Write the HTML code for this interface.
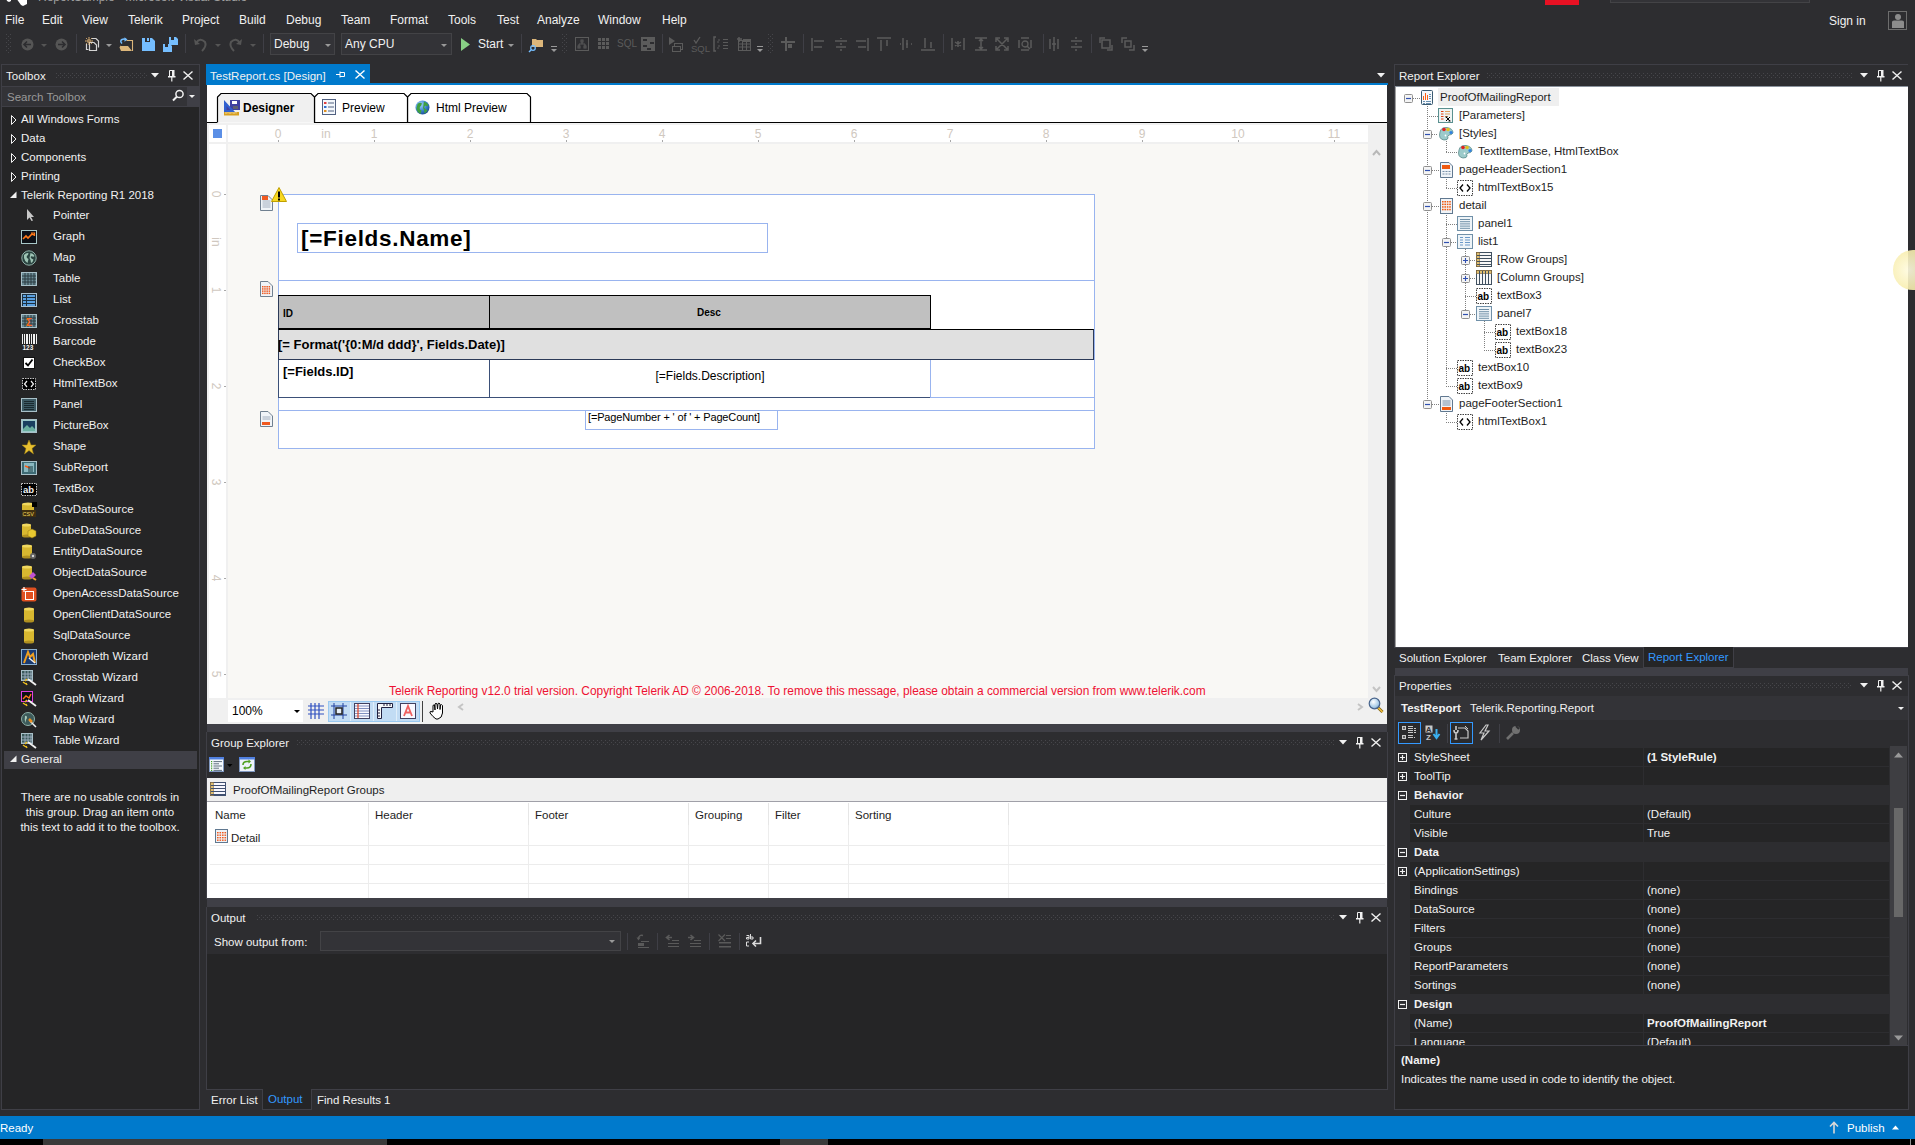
<!DOCTYPE html>
<html><head><meta charset="utf-8">
<style>
*{margin:0;padding:0;box-sizing:border-box}
html,body{width:1915px;height:1145px;overflow:hidden;background:#2d2d30;position:relative;font-family:"Liberation Sans",sans-serif}
.a{position:absolute}
.t{position:absolute;white-space:nowrap;font-size:11.5px;line-height:14px;color:#f1f1f1}
.b{font-weight:bold}
.dots{background-image:radial-gradient(circle,#46464a 0.7px,transparent 0.8px);background-size:4px 4px}
svg{position:absolute;overflow:visible}
</style></head><body>
<svg width="0" height="0" style="position:absolute"><defs><pattern id="dp" width="4" height="4" patternUnits="userSpaceOnUse"><rect x="0" y="0" width="1" height="1" fill="#46464a"/><rect x="2" y="2" width="1" height="1" fill="#46464a"/></pattern></defs></svg>

<!-- ============ TITLE BAR REMNANT ============ -->
<div id="title">
<svg style="left:0;top:0" width="30" height="8"><path d="M6 -2 L11 -2 L11 1 L9 2 L7 1 Z M16 -2 L27 -2 L27 4 L23 6 L21 5 Z" fill="#fff"/></svg>
<div class="t" style="left:38px;top:-10px;color:#a0a0a0;font-size:12px">ReportSample - Microsoft Visual Studio</div>
<div class="a" style="left:1545px;top:0;width:34px;height:5px;background:#e81123"></div>
<div class="a" style="left:1610px;top:-10px;width:200px;height:13px;border:1px solid #434346;background:#333337"></div>
<div class="t" style="left:1829px;top:14px;font-size:12px">Sign in</div>
<div class="a" style="left:1888px;top:11px;width:19px;height:19px;border:1px solid #6d6d6d"></div>
<svg style="left:1889px;top:12px" width="17" height="17"><circle cx="9" cy="5" r="3" fill="#8c8c8c"/><path d="M3 16 L3 10 Q3 8.5 5 8.5 L13 8.5 Q15 8.5 15 10 L15 16 Z" fill="#8c8c8c"/><rect x="7" y="9" width="4" height="7" fill="#2d2d30" opacity="0.0"/></svg>
</div>

<!-- ============ MENU ============ -->
<div id="menu"><div class="t" style="left:5px;top:13px;font-size:12px">File</div><div class="t" style="left:42px;top:13px;font-size:12px">Edit</div><div class="t" style="left:82px;top:13px;font-size:12px">View</div><div class="t" style="left:128px;top:13px;font-size:12px">Telerik</div><div class="t" style="left:182px;top:13px;font-size:12px">Project</div><div class="t" style="left:239px;top:13px;font-size:12px">Build</div><div class="t" style="left:286px;top:13px;font-size:12px">Debug</div><div class="t" style="left:341px;top:13px;font-size:12px">Team</div><div class="t" style="left:390px;top:13px;font-size:12px">Format</div><div class="t" style="left:448px;top:13px;font-size:12px">Tools</div><div class="t" style="left:497px;top:13px;font-size:12px">Test</div><div class="t" style="left:537px;top:13px;font-size:12px">Analyze</div><div class="t" style="left:598px;top:13px;font-size:12px">Window</div><div class="t" style="left:662px;top:13px;font-size:12px">Help</div></div>

<!-- ============ TOOLBAR ============ -->
<div id="toolbar">
<svg style="left:6px;top:34px" width="6" height="19"><rect width="6" height="19" fill="url(#dp)"/></svg>
<svg style="left:21px;top:38px" width="13" height="13"><circle cx="6.5" cy="6.5" r="6" fill="#555"/><path d="M3 6.5 L10 6.5 M6 3.5 L3 6.5 L6 9.5" stroke="#2d2d30" stroke-width="1.6" fill="none"/></svg>
<svg style="left:41px;top:44px" width="7" height="4"><path d="M0 0 L6 0 L3 3 Z" fill="#555"/></svg>
<svg style="left:55px;top:38px" width="13" height="13"><circle cx="6.5" cy="6.5" r="6" fill="#555"/><path d="M3 6.5 L10 6.5 M7 3.5 L10 6.5 L7 9.5" stroke="#2d2d30" stroke-width="1.6" fill="none"/></svg>
<div class="a" style="left:76px;top:34px;width:1px;height:19px;background:#3f3f46"></div>
<svg style="left:85px;top:37px" width="15" height="15"><path d="M6.5 1.5 L11 1.5 L13.5 4 L13.5 10.5" stroke="#d4d4d4" stroke-width="1.2" fill="none"/><path d="M1.5 7 L1.5 12.5 L3.5 12.5" stroke="#d4d4d4" stroke-width="1.2" fill="none"/><path d="M4.5 5.5 L9 5.5 L11.5 8 L11.5 13.5 L4.5 13.5 Z" fill="#2d2d30" stroke="#d4d4d4" stroke-width="1.2"/><circle cx="4" cy="4" r="1.3" fill="none" stroke="#f5c27a" stroke-width="1"/><path d="M4 0 L4 1.8 M4 6.2 L4 8 M0 4 L1.8 4 M6.2 4 L8 4 M1.2 1.2 L2.4 2.4 M5.6 5.6 L6.8 6.8 M6.8 1.2 L5.6 2.4 M2.4 5.6 L1.2 6.8" stroke="#f5c27a" stroke-width="0.9"/></svg>
<svg style="left:106px;top:44px" width="7" height="4"><path d="M0 0 L6 0 L3 3 Z" fill="#999"/></svg>
<svg style="left:119px;top:37px" width="15" height="15"><path d="M7.5 3.5 L13.5 3.5 L13.5 14" stroke="#dcb67a" stroke-width="1.1" fill="none"/><path d="M1.5 8.5 L2 9 L9 9 L13 14 L2 14 L0.5 10.5 Z" fill="#dcb67a"/><path d="M3 6.5 Q0.5 4 3 2.5 Q5 1.5 7 2.5" stroke="#75beff" stroke-width="1.5" fill="none"/><path d="M5.5 0.2 L8.5 2.5 L5.5 4.8 Z" fill="#75beff"/></svg>
<svg style="left:142px;top:38px" width="13" height="13"><path d="M0 0 L10 0 L13 3 L13 13 L0 13 Z" fill="#75beff"/><rect x="3" y="0" width="5" height="4" fill="#2d2d30"/><rect x="5" y="0" width="2" height="3" fill="#75beff"/></svg>
<svg style="left:163px;top:37px" width="15" height="15"><path d="M6 0 L13 0 L15 2 L15 8 L6 8 Z" fill="#75beff"/><path d="M0 7 L7 7 L9 9 L9 15 L0 15 Z" fill="#75beff"/><rect x="8" y="0" width="3" height="3" fill="#2d2d30"/><rect x="2" y="7" width="3" height="3" fill="#2d2d30"/></svg>
<div class="a" style="left:185px;top:34px;width:1px;height:19px;background:#3f3f46"></div>
<svg style="left:194px;top:37px" width="13" height="15"><path d="M2 6 Q6 0 11 5 Q13 9 8 14" stroke="#555" stroke-width="2" fill="none"/><path d="M0 2 L1 8 L6 7 Z" fill="#555"/></svg>
<svg style="left:215px;top:44px" width="7" height="4"><path d="M0 0 L6 0 L3 3 Z" fill="#555"/></svg>
<svg style="left:229px;top:37px" width="13" height="15"><path d="M11 6 Q7 0 2 5 Q0 9 5 14" stroke="#555" stroke-width="2" fill="none"/><path d="M13 2 L12 8 L7 7 Z" fill="#555"/></svg>
<svg style="left:250px;top:44px" width="7" height="4"><path d="M0 0 L6 0 L3 3 Z" fill="#555"/></svg>
<div class="a" style="left:263px;top:34px;width:1px;height:19px;background:#3f3f46"></div>
<div class="a" style="left:270px;top:33px;width:65px;height:22px;border:1px solid #434346;background:#333337"></div>
<div class="t" style="left:274px;top:37px;font-size:12px">Debug</div>
<svg style="left:325px;top:44px" width="7" height="4"><path d="M0 0 L6 0 L3 3 Z" fill="#999"/></svg>
<div class="a" style="left:341px;top:33px;width:111px;height:22px;border:1px solid #434346;background:#333337"></div>
<div class="t" style="left:345px;top:37px;font-size:12px">Any CPU</div>
<svg style="left:441px;top:44px" width="7" height="4"><path d="M0 0 L6 0 L3 3 Z" fill="#999"/></svg>
<svg style="left:461px;top:38px" width="10" height="13"><path d="M0 0 L9 6.5 L0 13 Z" fill="#89d185"/></svg>
<div class="t" style="left:478px;top:37px;font-size:12px">Start</div>
<svg style="left:508px;top:44px" width="7" height="4"><path d="M0 0 L6 0 L3 3 Z" fill="#999"/></svg>
<div class="a" style="left:521px;top:34px;width:1px;height:19px;background:#3f3f46"></div>
<svg style="left:529px;top:37px" width="15" height="15"><path d="M3 2 L7 2 L8 3 L14 3 L14 10 L3 10 Z" fill="#dcb67a"/><circle cx="4" cy="11" r="2.3" stroke="#75beff" stroke-width="1.3" fill="none"/><path d="M2.5 12.5 L0 15" stroke="#75beff" stroke-width="1.5"/></svg>
<svg style="left:551px;top:46px" width="7" height="8"><rect x="0" y="0" width="6" height="1" fill="#999"/><path d="M0 3 L6 3 L3 6 Z" fill="#999"/></svg>
<svg style="left:562px;top:34px" width="6" height="19"><rect width="6" height="19" fill="url(#dp)"/></svg>
<svg style="left:575px;top:37px" width="14" height="14"><rect x="0.5" y="0.5" width="13" height="13" stroke="#5b5b5b" fill="none"/><rect x="6" y="3" width="2" height="2" stroke="#5b5b5b" fill="none"/><path d="M7 5 L7 7 M4 7 L10 7 M4 7 L4 9 M10 7 L10 9" stroke="#5b5b5b"/><rect x="3" y="9" width="2" height="2" stroke="#5b5b5b" fill="none"/><rect x="9" y="9" width="2" height="2" stroke="#5b5b5b" fill="none"/></svg>
<svg style="left:598px;top:38px" width="12" height="12"><rect x="0" y="0" width="3" height="3" fill="#5b5b5b"/><rect x="0" y="4" width="3" height="3" fill="#5b5b5b"/><rect x="0" y="8" width="3" height="3" fill="#5b5b5b"/><rect x="4" y="0" width="3" height="3" fill="#5b5b5b"/><rect x="4" y="4" width="3" height="3" fill="#5b5b5b"/><rect x="4" y="8" width="3" height="3" fill="#5b5b5b"/><rect x="8" y="0" width="3" height="3" fill="#5b5b5b"/><rect x="8" y="4" width="3" height="3" fill="#5b5b5b"/><rect x="8" y="8" width="3" height="3" fill="#5b5b5b"/></svg>
<div class="t" style="left:617px;top:37px;font-size:10px;color:#5b5b5b">SQL</div>
<svg style="left:641px;top:37px" width="14" height="14"><rect x="0" y="0" width="14" height="14" fill="#5b5b5b"/><rect x="2" y="2" width="4" height="2" fill="#2d2d30"/><rect x="9" y="5" width="4" height="2" fill="#2d2d30"/><rect x="2" y="8" width="4" height="2" fill="#2d2d30"/><rect x="6" y="11" width="4" height="2" fill="#2d2d30"/></svg>
<div class="a" style="left:662px;top:34px;width:1px;height:19px;background:#3f3f46"></div>
<svg style="left:669px;top:37px" width="16" height="15"><path d="M0 0 L6 4 L0 8 Z" fill="#5b5b5b"/><rect x="5.5" y="6.5" width="8" height="6" stroke="#5b5b5b" fill="none"/><rect x="3.5" y="9.5" width="8" height="5" stroke="#5b5b5b" fill="#2d2d30"/></svg>
<svg style="left:692px;top:37px" width="15" height="15"><path d="M2 3 L4 6 L8 0" stroke="#5b5b5b" stroke-width="1.3" fill="none"/></svg><div class="t" style="left:691px;top:42px;font-size:9.5px;color:#5b5b5b">SQL</div>
<svg style="left:714px;top:37px" width="14" height="14"><path d="M2 0 L0 0 L0 14 L2 14" stroke="#5b5b5b" stroke-width="1.5" fill="none"/><path d="M4 3 L6 3 M4 4 L4 6 M4 9 L6 9 M4 10 L4 12 M9 2.5 L14 2.5 M9 5.5 L14 5.5 M9 8.5 L14 8.5 M9 11.5 L14 11.5" stroke="#5b5b5b" fill="none"/></svg>
<svg style="left:737px;top:37px" width="14" height="14"><path d="M2 0 L2 5 M0 2 L5 2" stroke="#5b5b5b" stroke-width="1.5"/><rect x="1.5" y="3.5" width="12" height="10" stroke="#5b5b5b" fill="none"/><path d="M1.5 7 L13.5 7 M1.5 10 L13.5 10 M5.5 4 L5.5 14 M9.5 4 L9.5 14" stroke="#5b5b5b"/><rect x="6" y="2" width="8" height="3" fill="#5b5b5b"/></svg>
<svg style="left:757px;top:46px" width="7" height="8"><rect x="0" y="0" width="6" height="1" fill="#999"/><path d="M0 3 L6 3 L3 6 Z" fill="#999"/></svg>
<svg style="left:768px;top:34px" width="6" height="19"><rect width="6" height="19" fill="url(#dp)"/></svg>
<svg style="left:781px;top:37px" width="15" height="15"><path d="M0 5 L14 5 M5 0 L5 14" stroke="#5b5b5b" stroke-width="2"/><rect x="7" y="7" width="4" height="4" fill="#5b5b5b"/></svg>
<div class="a" style="left:803px;top:34px;width:1px;height:19px;background:#3f3f46"></div>
<svg style="left:811px;top:37px" width="15" height="15"><path d="M1 1 L1 14 M3 4 L13 4 M3 10 L11 10" stroke="#5b5b5b" stroke-width="1.5" fill="none"/></svg>
<svg style="left:834px;top:37px" width="15" height="15"><path d="M7 1 L7 2 M1 4 L13 4 M2 10 L12 10 M7 12 L7 14 M7 6 L7 8" stroke="#5b5b5b" stroke-width="1.5" fill="none"/></svg>
<svg style="left:855px;top:37px" width="15" height="15"><path d="M13 1 L13 14 M1 4 L11 4 M3 10 L11 10" stroke="#5b5b5b" stroke-width="1.5" fill="none"/></svg>
<svg style="left:877px;top:37px" width="15" height="15"><path d="M0 1 L14 1 M4 3 L4 14 M10 3 L10 9" stroke="#5b5b5b" stroke-width="1.5" fill="none"/></svg>
<svg style="left:900px;top:37px" width="15" height="15"><path d="M0 7 L1 7 M3 1 L3 13 M7 3 L7 11 M11 7 L12 7 M6 7 L8 7" stroke="#5b5b5b" stroke-width="1.5" fill="none"/></svg>
<svg style="left:921px;top:37px" width="15" height="15"><path d="M0 13 L14 13 M4 1 L4 11 M10 5 L10 11" stroke="#5b5b5b" stroke-width="1.5" fill="none"/></svg>
<div class="a" style="left:943px;top:34px;width:1px;height:19px;background:#3f3f46"></div>
<svg style="left:951px;top:37px" width="15" height="15"><path d="M1 1 L1 13 M13 1 L13 13 M4 5 L10 9 M10 5 L4 9 M7 4 L7 10" stroke="#5b5b5b" stroke-width="1.5" fill="none"/></svg>
<svg style="left:974px;top:37px" width="15" height="15"><path d="M1 1 L13 1 M1 13 L13 13 M7 2 L7 12 M5 4 L7 2 L9 4 M5 10 L7 12 L9 10" stroke="#5b5b5b" stroke-width="1.5" fill="none"/></svg>
<svg style="left:995px;top:37px" width="15" height="15"><path d="M1 5 L1 1 L5 1 M9 1 L13 1 L13 5 M1 9 L1 13 L5 13 M13 9 L13 13 L9 13 M2 2 L12 12 M12 2 L2 12" stroke="#5b5b5b" stroke-width="1.5" fill="none"/></svg>
<svg style="left:1018px;top:37px" width="15" height="15"><path d="M1 3 L1 11 M13 3 L13 11 M3 1 L11 1 M3 13 L11 13" stroke="#5b5b5b" stroke-width="1.5"/><circle cx="7" cy="7" r="3" stroke="#5b5b5b" stroke-width="1.3" fill="none"/><path d="M9 9 L12 12" stroke="#5b5b5b" stroke-width="1.5"/></svg>
<div class="a" style="left:1043px;top:34px;width:1px;height:19px;background:#3f3f46"></div>
<svg style="left:1049px;top:37px" width="15" height="15"><path d="M1 2 L1 12 M5 0 L5 14 M9 2 L9 12 M3 7 L7 7" stroke="#5b5b5b" stroke-width="1.5" fill="none"/></svg>
<svg style="left:1070px;top:37px" width="15" height="15"><path d="M5 1 L7 1 M1 4 L12 4 M1 10 L12 10 M5 13 L7 13 M6 6 L6 8" stroke="#5b5b5b" stroke-width="1.5" fill="none"/></svg>
<div class="a" style="left:1091px;top:34px;width:1px;height:19px;background:#3f3f46"></div>
<svg style="left:1099px;top:37px" width="15" height="15"><path d="M1 6 L1 1 L6 1 M8 13 L13 13 L13 8 M3 3 L11 3 L11 11 L3 11 Z" stroke="#5b5b5b" stroke-width="1.5" fill="none"/></svg>
<svg style="left:1121px;top:37px" width="15" height="15"><path d="M1 6 L1 1 L6 1 M8 13 L13 13 L13 8 M4 4 L10 4 L10 10 L4 10 Z" stroke="#5b5b5b" stroke-width="1.5" fill="none"/></svg>
<svg style="left:1142px;top:46px" width="7" height="8"><rect x="0" y="0" width="6" height="1" fill="#999"/><path d="M0 3 L6 3 L3 6 Z" fill="#999"/></svg>
</div>

<!-- ============ TOOLBOX ============ -->
<div id="toolbox">
<div class="a" style="left:1px;top:64px;width:199px;height:1046px;border:1px solid #3f3f46;background:#252526"></div>
<div class="a" style="left:2px;top:65px;width:197px;height:21px;background:#2d2d30"></div>
<div class="t" style="left:6px;top:69px">Toolbox</div>
<svg style="left:56px;top:73px" width="92" height="5"><rect width="92" height="5" fill="url(#dp)"/></svg>
<svg style="left:151px;top:73px" width="9" height="5"><path d="M0 0 L8 0 L4 4.5 Z" fill="#f1f1f1"/></svg><svg style="left:168px;top:70px" width="8" height="12"><path d="M1.5 0.5 L6 0.5 M1.5 0.5 L1.5 6" stroke="#f1f1f1" stroke-width="1" fill="none"/><rect x="4" y="0" width="2.5" height="6" fill="#f1f1f1"/><rect x="0" y="6" width="7.5" height="1.5" fill="#f1f1f1"/><rect x="3.2" y="7" width="1.2" height="4.5" fill="#f1f1f1"/></svg><svg style="left:183px;top:71px" width="10" height="9"><path d="M0.5 0.5 L9.5 8.5 M9.5 0.5 L0.5 8.5" stroke="#f1f1f1" stroke-width="1.4"/></svg>
<div class="a" style="left:2px;top:86px;width:197px;height:1px;background:#3f3f46"></div>
<div class="a" style="left:2px;top:87px;width:185px;height:19px;background:#333337"></div>
<div class="a" style="left:187px;top:87px;width:12px;height:19px;background:#3f3f46"></div>
<div class="a" style="left:2px;top:106px;width:197px;height:1px;background:#3f3f46"></div>
<div class="t" style="left:7px;top:90px;color:#999999">Search Toolbox</div>
<svg style="left:172px;top:89px" width="14" height="14"><circle cx="7.5" cy="5" r="3.6" stroke="#f1f1f1" stroke-width="1.5" fill="none"/><path d="M5 7.5 L1 11.5" stroke="#f1f1f1" stroke-width="2"/></svg>
<svg style="left:189px;top:95px" width="7" height="4"><path d="M0 0 L6 0 L3 3 Z" fill="#f1f1f1"/></svg>
<svg style="left:10px;top:115px" width="7" height="10"><path d="M1.5 0.5 L6 5 L1.5 9.5 Z" stroke="#f1f1f1" fill="none"/></svg>
<div class="t" style="left:21px;top:112px">All Windows Forms</div>
<svg style="left:10px;top:134px" width="7" height="10"><path d="M1.5 0.5 L6 5 L1.5 9.5 Z" stroke="#f1f1f1" fill="none"/></svg>
<div class="t" style="left:21px;top:131px">Data</div>
<svg style="left:10px;top:153px" width="7" height="10"><path d="M1.5 0.5 L6 5 L1.5 9.5 Z" stroke="#f1f1f1" fill="none"/></svg>
<div class="t" style="left:21px;top:150px">Components</div>
<svg style="left:10px;top:172px" width="7" height="10"><path d="M1.5 0.5 L6 5 L1.5 9.5 Z" stroke="#f1f1f1" fill="none"/></svg>
<div class="t" style="left:21px;top:169px">Printing</div>
<svg style="left:10px;top:191px" width="7" height="8"><path d="M6.5 0.5 L6.5 7 L0 7 Z" fill="#f1f1f1"/></svg>
<div class="t" style="left:21px;top:188px">Telerik Reporting R1 2018</div>
<svg style="left:21px;top:208px" width="16" height="16"><path d="M6 1 L6 12 L8.5 9.5 L10.5 13 L12 12.5 L10 9 L13 9 Z" fill="#c8c8c8"/></svg>
<div class="t" style="left:53px;top:208px">Pointer</div>
<svg style="left:21px;top:229px" width="16" height="16"><rect x="0.5" y="1.5" width="15" height="13" fill="#0d1117" stroke="#a8c8c8"/><path d="M2 10 L5 7 L7 9 L11 5 L13 6" stroke="#ff7a1a" stroke-width="1.6" fill="none"/><path d="M10 4 L13.5 4 L13.5 7" stroke="#ff7a1a" stroke-width="1.2" fill="none"/></svg>
<div class="t" style="left:53px;top:229px">Graph</div>
<svg style="left:21px;top:250px" width="16" height="16"><circle cx="8" cy="8" r="7.2" fill="#2a4440" stroke="#8fb0a8" stroke-width="1"/><path d="M3 5 Q5 2.5 7.5 3 L7 5 Q5 6 6 8 L7.5 9 L6.5 13 Q3.5 11 3 8 Z" fill="#9ec4b4"/><path d="M9.5 3 Q12.5 3.5 13.5 6 L12 7 L11 6 L9.5 7 Q10.5 9 12.5 9.5 Q12 12 10 13 L9.5 10 L8.5 8 Z" fill="#9ec4b4"/></svg>
<div class="t" style="left:53px;top:250px">Map</div>
<svg style="left:21px;top:271px" width="16" height="16"><rect x="0.5" y="1.5" width="15" height="13" fill="#6a8a94" stroke="#a8c0c8"/><path d="M4 2 L4 14" stroke="#2b3b40"/><path d="M7 2 L7 14" stroke="#2b3b40"/><path d="M10 2 L10 14" stroke="#2b3b40"/><path d="M13 2 L13 14" stroke="#2b3b40"/><path d="M1 5 L15 5" stroke="#2b3b40"/><path d="M1 8 L15 8" stroke="#2b3b40"/><path d="M1 11 L15 11" stroke="#2b3b40"/></svg>
<div class="t" style="left:53px;top:271px">Table</div>
<svg style="left:21px;top:292px" width="16" height="16"><rect x="0.5" y="1.5" width="15" height="13" fill="#1c3040" stroke="#a8c0d0"/><rect x="2" y="3" width="3" height="2" fill="#5aa0e0"/><rect x="6" y="3" width="8" height="2" fill="#5aa0e0"/><rect x="2" y="6" width="3" height="2" fill="#5aa0e0"/><rect x="6" y="6" width="8" height="2" fill="#5aa0e0"/><rect x="2" y="9" width="3" height="2" fill="#5aa0e0"/><rect x="6" y="9" width="8" height="2" fill="#5aa0e0"/><rect x="2" y="12" width="3" height="2" fill="#5aa0e0"/><rect x="6" y="12" width="8" height="2" fill="#5aa0e0"/></svg>
<div class="t" style="left:53px;top:292px">List</div>
<svg style="left:21px;top:313px" width="16" height="16"><rect x="0.5" y="1.5" width="15" height="13" fill="#6a8a94" stroke="#a8c0c8"/><path d="M4 2 L4 14" stroke="#2b3b40"/><path d="M7 2 L7 14" stroke="#2b3b40"/><path d="M10 2 L10 14" stroke="#2b3b40"/><path d="M13 2 L13 14" stroke="#2b3b40"/><path d="M1 5 L15 5" stroke="#2b3b40"/><path d="M1 8 L15 8" stroke="#2b3b40"/><path d="M1 11 L15 11" stroke="#2b3b40"/><text x="5" y="13" font-size="10" font-weight="bold" fill="#ff6a1a" font-family="Liberation Sans">Σ</text></svg>
<div class="t" style="left:53px;top:313px">Crosstab</div>
<svg style="left:21px;top:334px" width="16" height="16"><rect x="1" y="0" width="1" height="10" fill="#f1f1f1"/><rect x="3" y="0" width="1" height="10" fill="#f1f1f1"/><rect x="5" y="0" width="2" height="10" fill="#f1f1f1"/><rect x="8" y="0" width="1" height="10" fill="#f1f1f1"/><rect x="10" y="0" width="1" height="10" fill="#f1f1f1"/><rect x="12" y="0" width="2" height="10" fill="#f1f1f1"/><rect x="15" y="0" width="1" height="10" fill="#f1f1f1"/><text x="1.5" y="16" font-size="6.5" font-weight="bold" fill="#f1f1f1" font-family="Liberation Sans">123</text></svg>
<div class="t" style="left:53px;top:334px">Barcode</div>
<svg style="left:21px;top:355px" width="16" height="16"><rect x="2.5" y="2.5" width="11" height="11" fill="#fff" stroke="#111"/><path d="M4.5 8 L7 10.5 L11.5 4.5" stroke="#000" stroke-width="1.8" fill="none"/></svg>
<div class="t" style="left:53px;top:355px">CheckBox</div>
<svg style="left:21px;top:376px" width="16" height="16"><rect x="1.5" y="2.5" width="13" height="11" fill="#000" stroke="#c8c8c8" stroke-dasharray="1.5,1"/><path d="M6 5 L3.5 8 L6 11 M10 5 L12.5 8 L10 11" stroke="#f1f1f1" stroke-width="1.2" fill="none"/></svg>
<div class="t" style="left:53px;top:376px">HtmlTextBox</div>
<svg style="left:21px;top:397px" width="16" height="16"><rect x="0.5" y="1.5" width="15" height="13" fill="#3d5a64" stroke="#a8c0c8"/><path d="M3 4.5 L13 4.5" stroke="#1a2a30"/><path d="M3 6.5 L13 6.5" stroke="#1a2a30"/><path d="M3 8.5 L13 8.5" stroke="#1a2a30"/><path d="M3 10.5 L13 10.5" stroke="#1a2a30"/><path d="M3 12.5 L13 12.5" stroke="#1a2a30"/></svg>
<div class="t" style="left:53px;top:397px">Panel</div>
<svg style="left:21px;top:418px" width="16" height="16"><rect x="0.5" y="1.5" width="15" height="13" fill="#9ac8c8" stroke="#a8c0c8"/><rect x="2" y="3" width="12" height="10" fill="#1a4060"/><path d="M2 11 L6 7 L9 10 L11 8 L14 11 L14 13 L2 13 Z" fill="#6ab0a0"/></svg>
<div class="t" style="left:53px;top:418px">PictureBox</div>
<svg style="left:21px;top:439px" width="16" height="16"><path d="M8 1 L10 6 L15 6 L11 9.5 L12.5 15 L8 11.5 L3.5 15 L5 9.5 L1 6 L6 6 Z" fill="#e8c030" stroke="#a08010" stroke-width="0.5"/></svg>
<div class="t" style="left:53px;top:439px">Shape</div>
<svg style="left:21px;top:460px" width="16" height="16"><rect x="0.5" y="1.5" width="15" height="13" fill="#3d6a74" stroke="#a8c0c8"/><rect x="3" y="3" width="10" height="9" fill="#8ab8c0"/><path d="M4 6 L9 8" stroke="#ff5a10" stroke-width="1.5"/><path d="M7 7 L12 7" stroke="#1a3a40"/><path d="M7 9 L12 9" stroke="#1a3a40"/><path d="M7 11 L12 11" stroke="#1a3a40"/></svg>
<div class="t" style="left:53px;top:460px">SubReport</div>
<svg style="left:21px;top:481px" width="16" height="16"><rect x="0.5" y="2.5" width="15" height="12" fill="#000" stroke="#c8c8c8" stroke-dasharray="1.5,1"/><text x="2" y="12" font-size="9.5" font-weight="bold" fill="#f1f1f1" font-family="Liberation Sans">ab</text></svg>
<div class="t" style="left:53px;top:481px">TextBox</div>
<svg style="left:21px;top:502px" width="16" height="16"><rect x="1" y="2" width="12" height="11" fill="#d8b830"/><ellipse cx="7.0" cy="2" rx="6.0" ry="1.5" fill="#f0d860"/><ellipse cx="7.0" cy="13" rx="6.0" ry="1.5" fill="#b09020"/><rect x="11" y="0" width="5" height="5" fill="#000"/><rect x="1" y="8" width="14" height="7" fill="#403010"/><text x="1.5" y="14" font-size="5.5" fill="#f0d860" font-family="Liberation Sans">CSV</text></svg>
<div class="t" style="left:53px;top:502px">CsvDataSource</div>
<svg style="left:21px;top:523px" width="16" height="16"><rect x="1" y="2" width="9" height="11" fill="#d8b830"/><ellipse cx="5.5" cy="2" rx="4.5" ry="1.5" fill="#f0d860"/><ellipse cx="5.5" cy="13" rx="4.5" ry="1.5" fill="#b09020"/><path d="M7 8 L11 6 L15 8 L15 13 L11 15 L7 13 Z" fill="#e8c830" stroke="#907010" stroke-width="0.5"/></svg>
<div class="t" style="left:53px;top:523px">CubeDataSource</div>
<svg style="left:21px;top:544px" width="16" height="16"><rect x="1" y="2" width="10" height="11" fill="#d8b830"/><ellipse cx="6.0" cy="2" rx="5.0" ry="1.5" fill="#f0d860"/><ellipse cx="6.0" cy="13" rx="5.0" ry="1.5" fill="#b09020"/><circle cx="12" cy="12" r="3" fill="#606060"/><circle cx="12" cy="12" r="1.2" fill="#d8d8d8"/></svg>
<div class="t" style="left:53px;top:544px">EntityDataSource</div>
<svg style="left:21px;top:565px" width="16" height="16"><rect x="1" y="2" width="10" height="11" fill="#d8b830"/><ellipse cx="6.0" cy="2" rx="5.0" ry="1.5" fill="#f0d860"/><ellipse cx="6.0" cy="13" rx="5.0" ry="1.5" fill="#b09020"/><path d="M8 11 L12 7 L15 10 L11 14 Z" fill="#c050d0"/><path d="M12 13 L15 15" stroke="#f0a030" stroke-width="2"/></svg>
<div class="t" style="left:53px;top:565px">ObjectDataSource</div>
<svg style="left:21px;top:586px" width="16" height="16"><rect x="0.5" y="1.5" width="15" height="14" rx="2" fill="#e05020"/><rect x="4.5" y="5.5" width="8" height="8" fill="#e05020" stroke="#fff"/><path d="M3 1 L3 6 M0.5 3.5 L5.5 3.5" stroke="#fff" stroke-width="1.2"/></svg>
<div class="t" style="left:53px;top:586px">OpenAccessDataSource</div>
<svg style="left:21px;top:607px" width="16" height="16"><rect x="3" y="2" width="10" height="12" fill="#d8b830"/><ellipse cx="8.0" cy="2" rx="5.0" ry="1.5" fill="#f0d860"/><ellipse cx="8.0" cy="14" rx="5.0" ry="1.5" fill="#b09020"/></svg>
<div class="t" style="left:53px;top:607px">OpenClientDataSource</div>
<svg style="left:21px;top:628px" width="16" height="16"><rect x="3" y="2" width="10" height="12" fill="#d8b830"/><ellipse cx="8.0" cy="2" rx="5.0" ry="1.5" fill="#f0d860"/><ellipse cx="8.0" cy="14" rx="5.0" ry="1.5" fill="#b09020"/></svg>
<div class="t" style="left:53px;top:628px">SqlDataSource</div>
<svg style="left:21px;top:649px" width="16" height="16"><rect x="0.5" y="0.5" width="15" height="15" fill="#1a3a70" stroke="#8ab0d0"/><path d="M3 14 L7 3 L9 8 L12 5 L14 14" stroke="#f0a020" stroke-width="2" fill="none"/><path d="M8 9 L14 14" stroke="#f1f1f1" stroke-width="1.5"/></svg>
<div class="t" style="left:53px;top:649px">Choropleth Wizard</div>
<svg style="left:21px;top:670px" width="16" height="16"><rect x="0.5" y="0.5" width="11" height="10" fill="#3a5a5a" stroke="#a8c0c8"/><path d="M4 1 L4 10" stroke="#9ab"/><path d="M7 1 L7 10" stroke="#9ab"/><path d="M10 1 L10 10" stroke="#9ab"/><path d="M1 4 L11 4" stroke="#9ab"/><path d="M1 7 L11 7" stroke="#9ab"/><path d="M1 10 L11 10" stroke="#9ab"/><path d="M7 9 L15 15" stroke="#f1f1f1" stroke-width="1.8"/><path d="M4 11 L6 9 M2 12 L5 14 M5 13 L6 15" stroke="#f0c020" stroke-width="1.4"/></svg>
<div class="t" style="left:53px;top:670px">Crosstab Wizard</div>
<svg style="left:21px;top:691px" width="16" height="16"><rect x="0.5" y="0.5" width="11" height="10" fill="#0d1117" stroke="#e040e0"/><path d="M2 8 L5 5 L8 7 L10 3" stroke="#ff7a1a" stroke-width="1.4" fill="none"/><path d="M7 9 L15 15" stroke="#f1f1f1" stroke-width="1.8"/><path d="M4 11 L6 9 M2 12 L5 14 M5 13 L6 15" stroke="#f0c020" stroke-width="1.4"/></svg>
<div class="t" style="left:53px;top:691px">Graph Wizard</div>
<svg style="left:21px;top:712px" width="16" height="16"><circle cx="7" cy="7" r="6.5" fill="#3c5a5a" stroke="#8fb0a8"/><path d="M4 4 Q6 3 6 6 Q4 8 5 11 Q3 8 4 4" fill="#a8c8b8"/><path d="M9 9 L15 15" stroke="#f1f1f1" stroke-width="1.5"/><path d="M8 7 L11 10" stroke="#f09020" stroke-width="2.5"/></svg>
<div class="t" style="left:53px;top:712px">Map Wizard</div>
<svg style="left:21px;top:733px" width="16" height="16"><rect x="0.5" y="0.5" width="11" height="10" fill="#3a5a5a" stroke="#a8c0c8"/><path d="M4 1 L4 10" stroke="#9ab"/><path d="M7 1 L7 10" stroke="#9ab"/><path d="M10 1 L10 10" stroke="#9ab"/><path d="M1 4 L11 4" stroke="#9ab"/><path d="M1 7 L11 7" stroke="#9ab"/><path d="M1 10 L11 10" stroke="#9ab"/><path d="M7 9 L15 15" stroke="#f1f1f1" stroke-width="1.8"/><path d="M4 11 L6 9 M2 12 L5 14 M5 13 L6 15" stroke="#f0c020" stroke-width="1.4"/></svg>
<div class="t" style="left:53px;top:733px">Table Wizard</div>
<div class="a" style="left:4px;top:751px;width:193px;height:18px;background:#3f3f46"></div>
<svg style="left:10px;top:755px" width="7" height="8"><path d="M6.5 0.5 L6.5 7 L0 7 Z" fill="#f1f1f1"/></svg>
<div class="t" style="left:21px;top:752px">General</div>
<div class="t" style="left:0;width:200px;text-align:center;top:790px;line-height:15px;white-space:normal;padding:0 14px">There are no usable controls in<br>this group. Drag an item onto<br>this text to add it to the toolbox.</div>
</div>

<!-- ============ DOCUMENT ============ -->
<div id="doc">
<div class="a" style="left:206px;top:64px;width:164px;height:21px;background:#007acc"></div>
<div class="t" style="left:210px;top:69px">TestReport.cs [Design]</div>
<svg style="left:336px;top:70px" width="10" height="9"><path d="M0 4.5 L4 4.5 M4 1.5 L4 7.5 M4 2.5 L8.5 2.5 L8.5 6.5 L4 6.5 M8.5 4.5 L8.5 4.5" stroke="#fff" stroke-width="1" fill="none"/></svg>
<svg style="left:355px;top:70px" width="10" height="9"><path d="M0.5 0.5 L9.5 8.5 M9.5 0.5 L0.5 8.5" stroke="#fff" stroke-width="1.4"/></svg>
<div class="a" style="left:206px;top:83px;width:1182px;height:2px;background:#007acc"></div>
<svg style="left:1377px;top:73px" width="9" height="5"><path d="M0 0 L8 0 L4 4.5 Z" fill="#f1f1f1"/></svg>
<div class="a" style="left:207px;top:85px;width:1180px;height:639px;background:#fff"></div>
<svg style="left:407px;top:93px" width="124" height="30"><path d="M0.5 29.5 L0.5 4 L4 0.5 L120 0.5 L123.5 4 L123.5 29.5" fill="#fff" stroke="#000" stroke-width="1.2"/></svg>
<svg style="left:314px;top:93px" width="94" height="30"><path d="M0.5 29.5 L0.5 4 L4 0.5 L90 0.5 L93.5 4 L93.5 29.5" fill="#fff" stroke="#000" stroke-width="1.2"/></svg>
<svg style="left:217px;top:93px" width="98" height="30"><path d="M0.5 29.5 L0.5 4 L4 0.5 L94 0.5 L97.5 4 L97.5 29.5" fill="#f0f0f0" stroke="#000" stroke-width="1.2"/></svg>
<div class="a" style="left:207px;top:122px;width:10px;height:1px;background:#000"></div>
<div class="a" style="left:314px;top:122px;width:1073px;height:1px;background:#000"></div>
<svg style="left:224px;top:100px" width="16" height="16"><rect x="6" y="0" width="10" height="10" fill="#4040a0"/><rect x="8" y="1" width="5" height="3" fill="#fff"/><rect x="9" y="6" width="5" height="3" fill="#606070"/><path d="M0 0 L0 12 L11 12 Z" fill="#3060d0"/><path d="M2.5 6 L2.5 10 L6.5 10 Z" fill="#4040a0"/><rect x="0" y="12" width="15" height="3.5" fill="#d8a020"/><path d="M2 12 L2 14 M4 12 L4 13.5 M6 12 L6 14 M8 12 L8 13.5 M10 12 L10 14 M12 12 L12 13.5" stroke="#fff" stroke-width="0.6"/></svg>
<div class="t b" style="left:243px;top:101px;color:#000;font-size:12px">Designer</div>
<svg style="left:322px;top:99px" width="15" height="16"><rect x="0.5" y="0.5" width="13" height="15" fill="#f4f8fc" stroke="#506080"/><rect x="2" y="3" width="2.5" height="2" fill="#e04040"/><rect x="2" y="7" width="2.5" height="2" fill="#3070d0"/><rect x="2" y="11" width="2.5" height="2" fill="#e09020"/><path d="M6 4 L12 4 M6 8 L12 8 M6 12 L12 12" stroke="#506080"/></svg>
<div class="t" style="left:342px;top:101px;color:#000;font-size:12px">Preview</div>
<svg style="left:415px;top:100px" width="15" height="15"><defs><radialGradient id="gg" cx="0.35" cy="0.3" r="0.75"><stop offset="0" stop-color="#a8d8ff"/><stop offset="0.6" stop-color="#3a80d0"/><stop offset="1" stop-color="#1a4a90"/></radialGradient></defs><circle cx="7.5" cy="7.5" r="7" fill="url(#gg)"/><path d="M2.5 4 Q5 2 7 3.5 L6 6 Q4 7 5 9.5 L6.5 10.5 L5.5 14 Q2 12 1.5 8.5 Z" fill="#40a040"/><path d="M9 1.5 Q12.5 2.5 13.5 5 L12 6.5 L10.5 5.5 L9 7 Q10 9.5 12.5 10 Q11.5 13 9.5 13.5 L9 10 L8 8 Z" fill="#40a040"/></svg>
<div class="t" style="left:436px;top:101px;color:#000;font-size:12px">Html Preview</div>
<div class="a" style="left:207px;top:123px;width:1180px;height:575px;background:#f0f0f0"></div>
<div class="a" style="left:209px;top:125px;width:17px;height:17px;background:#fff"></div>
<div class="a" style="left:213px;top:129px;width:9px;height:9px;background:#5b8fe6"></div>
<div class="a" style="left:228px;top:125px;width:1140px;height:17px;background:#fff"></div>
<div class="a" style="left:209px;top:144px;width:17px;height:554px;background:#fff"></div>
<div class="a" style="left:228px;top:144px;width:1140px;height:554px;background:#f9f8f5"></div>
<div class="t" style="left:258px;width:40px;text-align:center;top:127px;color:#d0c8c0;font-size:12px">0</div>
<div class="a" style="left:278px;top:140px;width:1px;height:2px;background:#a8a8a8"></div>
<div class="t" style="left:306px;width:40px;text-align:center;top:127px;color:#d0c8c0;font-size:12px">in</div>
<div class="t" style="left:354px;width:40px;text-align:center;top:127px;color:#d0c8c0;font-size:12px">1</div>
<div class="a" style="left:374px;top:140px;width:1px;height:2px;background:#a8a8a8"></div>
<div class="t" style="left:450px;width:40px;text-align:center;top:127px;color:#d0c8c0;font-size:12px">2</div>
<div class="a" style="left:470px;top:140px;width:1px;height:2px;background:#a8a8a8"></div>
<div class="t" style="left:546px;width:40px;text-align:center;top:127px;color:#d0c8c0;font-size:12px">3</div>
<div class="a" style="left:566px;top:140px;width:1px;height:2px;background:#a8a8a8"></div>
<div class="t" style="left:642px;width:40px;text-align:center;top:127px;color:#d0c8c0;font-size:12px">4</div>
<div class="a" style="left:662px;top:140px;width:1px;height:2px;background:#a8a8a8"></div>
<div class="t" style="left:738px;width:40px;text-align:center;top:127px;color:#d0c8c0;font-size:12px">5</div>
<div class="a" style="left:758px;top:140px;width:1px;height:2px;background:#a8a8a8"></div>
<div class="t" style="left:834px;width:40px;text-align:center;top:127px;color:#d0c8c0;font-size:12px">6</div>
<div class="a" style="left:854px;top:140px;width:1px;height:2px;background:#a8a8a8"></div>
<div class="t" style="left:930px;width:40px;text-align:center;top:127px;color:#d0c8c0;font-size:12px">7</div>
<div class="a" style="left:950px;top:140px;width:1px;height:2px;background:#a8a8a8"></div>
<div class="t" style="left:1026px;width:40px;text-align:center;top:127px;color:#d0c8c0;font-size:12px">8</div>
<div class="a" style="left:1046px;top:140px;width:1px;height:2px;background:#a8a8a8"></div>
<div class="t" style="left:1122px;width:40px;text-align:center;top:127px;color:#d0c8c0;font-size:12px">9</div>
<div class="a" style="left:1142px;top:140px;width:1px;height:2px;background:#a8a8a8"></div>
<div class="t" style="left:1218px;width:40px;text-align:center;top:127px;color:#d0c8c0;font-size:12px">10</div>
<div class="a" style="left:1238px;top:140px;width:1px;height:2px;background:#a8a8a8"></div>
<div class="t" style="left:1314px;width:40px;text-align:center;top:127px;color:#d0c8c0;font-size:12px">11</div>
<div class="a" style="left:1334px;top:140px;width:1px;height:2px;background:#a8a8a8"></div>
<div class="t" style="left:209px;top:187px;width:14px;text-align:center;color:#d0c8c0;font-size:12px;transform:rotate(90deg)">0</div>
<div class="a" style="left:224px;top:194px;width:2px;height:1px;background:#a8a8a8"></div>
<div class="t" style="left:209px;top:235px;width:14px;text-align:center;color:#d0c8c0;font-size:12px;transform:rotate(90deg)">in</div>
<div class="t" style="left:209px;top:283px;width:14px;text-align:center;color:#d0c8c0;font-size:12px;transform:rotate(90deg)">1</div>
<div class="a" style="left:224px;top:290px;width:2px;height:1px;background:#a8a8a8"></div>
<div class="t" style="left:209px;top:379px;width:14px;text-align:center;color:#d0c8c0;font-size:12px;transform:rotate(90deg)">2</div>
<div class="a" style="left:224px;top:386px;width:2px;height:1px;background:#a8a8a8"></div>
<div class="t" style="left:209px;top:475px;width:14px;text-align:center;color:#d0c8c0;font-size:12px;transform:rotate(90deg)">3</div>
<div class="a" style="left:224px;top:482px;width:2px;height:1px;background:#a8a8a8"></div>
<div class="t" style="left:209px;top:571px;width:14px;text-align:center;color:#d0c8c0;font-size:12px;transform:rotate(90deg)">4</div>
<div class="a" style="left:224px;top:578px;width:2px;height:1px;background:#a8a8a8"></div>
<div class="t" style="left:209px;top:667px;width:14px;text-align:center;color:#d0c8c0;font-size:12px;transform:rotate(90deg)">5</div>
<div class="a" style="left:224px;top:674px;width:2px;height:1px;background:#a8a8a8"></div>
<svg style="left:1372px;top:149px" width="9" height="7"><path d="M1 6 L4.5 2 L8 6" stroke="#b8b8b8" stroke-width="2" fill="none"/></svg>
<svg style="left:1372px;top:686px" width="9" height="7"><path d="M1 1 L4.5 5 L8 1" stroke="#c4c4c4" stroke-width="2" fill="none"/></svg>
</div>
<div id="report">
<div class="a" style="left:278px;top:194px;width:817px;height:255px;background:#fff;border:1px solid #99b4ef"></div>
<div class="a" style="left:278px;top:280px;width:817px;height:1px;background:#99b4ef"></div>
<div class="a" style="left:278px;top:410px;width:817px;height:1px;background:#99b4ef"></div>
<div class="a" style="left:297px;top:223px;width:471px;height:30px;border:1px solid #99b4ef"></div>
<div class="t b" style="left:301px;top:227px;color:#000;font-size:22.5px;line-height:24px;letter-spacing:0.7px">[=Fields.Name]</div>
<svg style="left:260px;top:195px" width="13" height="16"><path d="M0.5 0.5 L8 0.5 L12.5 5 L12.5 15.5 L0.5 15.5 Z" fill="#f0f4f8" stroke="#708090"/><path d="M2.5 6 L10.5 6" stroke="#90a0b0" stroke-width="0.8"/><path d="M2.5 8 L10.5 8" stroke="#90a0b0" stroke-width="0.8"/><path d="M2.5 10 L10.5 10" stroke="#90a0b0" stroke-width="0.8"/><path d="M2.5 12 L10.5 12" stroke="#90a0b0" stroke-width="0.8"/><rect x="2" y="1" width="6" height="4" fill="#f05a20"/></svg>
<svg style="left:271px;top:187px" width="16" height="15"><path d="M8 0.5 L15.5 14.5 L0.5 14.5 Z" fill="#f8d820" stroke="#c0a000"/><rect x="7" y="4.5" width="2" height="6" fill="#000"/><rect x="7" y="11.5" width="2" height="2" fill="#000"/></svg>
<svg style="left:260px;top:281px" width="13" height="16"><path d="M0.5 0.5 L8 0.5 L12.5 5 L12.5 15.5 L0.5 15.5 Z" fill="#f0f4f8" stroke="#708090"/><rect x="2.0" y="5.0" width="1.5" height="1.5" fill="#f05a20"/><rect x="2.0" y="7.2" width="1.5" height="1.5" fill="#f05a20"/><rect x="2.0" y="9.4" width="1.5" height="1.5" fill="#f05a20"/><rect x="2.0" y="11.600000000000001" width="1.5" height="1.5" fill="#f05a20"/><rect x="4.2" y="5.0" width="1.5" height="1.5" fill="#f05a20"/><rect x="4.2" y="7.2" width="1.5" height="1.5" fill="#f05a20"/><rect x="4.2" y="9.4" width="1.5" height="1.5" fill="#f05a20"/><rect x="4.2" y="11.600000000000001" width="1.5" height="1.5" fill="#f05a20"/><rect x="6.4" y="5.0" width="1.5" height="1.5" fill="#f05a20"/><rect x="6.4" y="7.2" width="1.5" height="1.5" fill="#f05a20"/><rect x="6.4" y="9.4" width="1.5" height="1.5" fill="#f05a20"/><rect x="6.4" y="11.600000000000001" width="1.5" height="1.5" fill="#f05a20"/><rect x="8.600000000000001" y="5.0" width="1.5" height="1.5" fill="#f05a20"/><rect x="8.600000000000001" y="7.2" width="1.5" height="1.5" fill="#f05a20"/><rect x="8.600000000000001" y="9.4" width="1.5" height="1.5" fill="#f05a20"/><rect x="8.600000000000001" y="11.600000000000001" width="1.5" height="1.5" fill="#f05a20"/></svg>
<svg style="left:260px;top:411px" width="13" height="16"><path d="M0.5 0.5 L8 0.5 L12.5 5 L12.5 15.5 L0.5 15.5 Z" fill="#f0f4f8" stroke="#708090"/><path d="M2.5 6 L10.5 6" stroke="#90a0b0" stroke-width="0.8"/><path d="M2.5 8 L10.5 8" stroke="#90a0b0" stroke-width="0.8"/><rect x="2" y="11" width="8" height="3" fill="#f05a20"/></svg>
<div class="a" style="left:278px;top:295px;width:653px;height:34px;background:#c0c0c0;border:1px solid #000;border-left-color:#2c3a58"></div>
<div class="a" style="left:489px;top:296px;width:1px;height:32px;background:#000"></div>
<div class="t b" style="left:283px;top:307px;color:#000;font-size:10px">ID</div>
<div class="t b" style="left:697px;top:306px;color:#000;font-size:10px">Desc</div>
<div class="a" style="left:278px;top:329px;width:816px;height:31px;background:#e0e0e0;border:1px solid #2c3a58;border-top-color:#000"></div>
<div class="t b" style="left:278px;top:337px;color:#000;font-size:13px;line-height:16px">[= Format('{0:M/d ddd}', Fields.Date)]</div>
<div class="a" style="left:278px;top:360px;width:212px;height:38px;border:1px solid #3b5078;border-top:none;border-right:none"></div><div class="a" style="left:489px;top:397px;width:442px;height:1px;background:#3b5078"></div>
<div class="a" style="left:489px;top:360px;width:1px;height:38px;background:#3b5078"></div>
<div class="a" style="left:930px;top:360px;width:165px;height:38px;border:1px solid #99b4ef;border-top:none;border-left:none"></div>
<div class="a" style="left:930px;top:360px;width:1px;height:37px;background:#99b4ef"></div>
<div class="t" style="left:283px;top:364px;color:#000;font-size:13px;line-height:16px;font-weight:bold">[=Fields.ID]</div>
<div class="t" style="left:490px;width:440px;text-align:center;top:369px;color:#000;font-size:12px">[=Fields.Description]</div>
<div class="a" style="left:585px;top:410px;width:193px;height:20px;border:1px solid #99b4ef"></div>
<div class="t" style="left:588px;top:410px;color:#000;font-size:11px;letter-spacing:-0.15px">[=PageNumber + ' of ' + PageCount]</div>
<div class="t" style="left:389px;top:684px;color:#ee1133;font-size:11.9px">Telerik Reporting v12.0 trial version. Copyright Telerik AD © 2006-2018. To remove this message, please obtain a commercial version from www.telerik.com</div>
</div>
<div id="zoombar">
<div class="a" style="left:207px;top:698px;width:1180px;height:26px;background:#f0f0f0"></div>
<div class="a" style="left:228px;top:700px;width:75px;height:22px;background:#fff"></div>
<div class="t" style="left:232px;top:704px;color:#000;font-size:12px">100%</div>
<svg style="left:294px;top:710px" width="7" height="4"><path d="M0 0 L6 0 L3 3 Z" fill="#000"/></svg>
<svg style="left:308px;top:703px" width="16" height="16"><path d="M3 0 L3 16 M7 0 L7 16 M11 0 L11 16 M0 3 L16 3 M0 7 L16 7 M0 11 L16 11" stroke="#3050c0" stroke-width="1.2"/></svg>
<div class="a" style="left:328px;top:701px;width:92px;height:21px;background:#c2dcf4;border:1px solid #99c8f0"></div>
<div class="a" style="left:350px;top:702px;width:1px;height:19px;background:#e0eefa"></div>
<div class="a" style="left:373px;top:702px;width:1px;height:19px;background:#e0eefa"></div>
<div class="a" style="left:396px;top:702px;width:1px;height:19px;background:#e0eefa"></div>
<svg style="left:331px;top:703px" width="16" height="16"><path d="M3 0 L3 16 M12 0 L12 16 M0 3 L16 3 M0 12 L16 12" stroke="#2040a0" stroke-width="1"/><rect x="5" y="5" width="6" height="6" fill="#e8f0f8" stroke="#222" stroke-width="1.5"/></svg>
<svg style="left:354px;top:703px" width="16" height="16"><rect x="0.5" y="0.5" width="15" height="15" fill="#f8f8ff" stroke="#404060"/><path d="M1 3.0 L15 3.0" stroke="#8090c0"/><path d="M1 5.5 L15 5.5" stroke="#8090c0"/><path d="M1 8.0 L15 8.0" stroke="#8090c0"/><path d="M1 10.5 L15 10.5" stroke="#8090c0"/><path d="M1 13.0 L15 13.0" stroke="#8090c0"/><path d="M4 1 L4 15" stroke="#e04020" stroke-width="1.2"/></svg>
<svg style="left:377px;top:703px" width="16" height="16"><path d="M0.5 15.5 L0.5 0.5 L15.5 0.5 L15.5 4.5 L4.5 4.5 L4.5 15.5 Z" fill="#f8f8f8" stroke="#202040"/><path d="M7 1 L7 3 M10 1 L10 3 M13 1 L13 3 M1 7 L3 7 M1 10 L3 10 M1 13 L3 13" stroke="#202040"/></svg>
<svg style="left:400px;top:703px" width="16" height="16"><rect x="0.5" y="0.5" width="15" height="15" fill="#f8f8ff" stroke="#404060"/><path d="M4 13 L8 3 L12 13 M5.5 9.5 L10.5 9.5" stroke="#f06060" stroke-width="1.8" fill="none"/></svg>
<div class="a" style="left:422px;top:701px;width:1px;height:21px;background:#404040"></div>
<svg style="left:429px;top:702px" width="17" height="18"><path d="M4 10 L4 4 Q4 2.5 5.5 3 L6 8 L6 2 Q7 0.5 8 2 L8.5 7 L9 1.5 Q10 0.5 11 2 L11 7.5 L11.5 3 Q12.5 2 13.5 3.5 L13.5 11 Q13 16 9 17 L7 17 Q4 15 1 11 Q0.5 9.5 2 9.5 Z" fill="#fff" stroke="#000" stroke-width="1"/></svg>
<svg style="left:457px;top:703px" width="7" height="8"><path d="M6 1 L2 4 L6 7" stroke="#c4c4c4" stroke-width="2" fill="none"/></svg>
<svg style="left:1357px;top:703px" width="7" height="8"><path d="M1 1 L5 4 L1 7" stroke="#c4c4c4" stroke-width="2" fill="none"/></svg>
<svg style="left:1368px;top:697px" width="17" height="18"><defs><radialGradient id="mg" cx="0.4" cy="0.35" r="0.7"><stop offset="0" stop-color="#ffffff"/><stop offset="0.7" stop-color="#a8cce8"/><stop offset="1" stop-color="#6890b8"/></radialGradient></defs><path d="M10 10.5 L14.5 15" stroke="#806010" stroke-width="3"/><path d="M10 10.5 L14.5 15" stroke="#f0c040" stroke-width="1.6"/><circle cx="6.5" cy="6.5" r="5.3" fill="url(#mg)" stroke="#48648c" stroke-width="1.2"/></svg>
</div>

<!-- ============ GROUP EXPLORER ============ -->
<div id="group">
<div class="a" style="left:207px;top:724px;width:1180px;height:8px;background:#3f3f46"></div>
<div class="a" style="left:206px;top:732px;width:1182px;height:167px;background:#2d2d30;border-left:1px solid #3f3f46;border-right:1px solid #3f3f46"></div>
<div class="t" style="left:211px;top:736px">Group Explorer</div>
<svg style="left:297px;top:740px" width="1038" height="5"><rect width="1038" height="5" fill="url(#dp)"/></svg>
<svg style="left:1339px;top:740px" width="9" height="5"><path d="M0 0 L8 0 L4 4.5 Z" fill="#f1f1f1"/></svg><svg style="left:1356px;top:737px" width="8" height="12"><path d="M1.5 0.5 L6 0.5 M1.5 0.5 L1.5 6" stroke="#f1f1f1" stroke-width="1" fill="none"/><rect x="4" y="0" width="2.5" height="6" fill="#f1f1f1"/><rect x="0" y="6" width="7.5" height="1.5" fill="#f1f1f1"/><rect x="3.2" y="7" width="1.2" height="4.5" fill="#f1f1f1"/></svg><svg style="left:1371px;top:738px" width="10" height="9"><path d="M0.5 0.5 L9.5 8.5 M9.5 0.5 L0.5 8.5" stroke="#f1f1f1" stroke-width="1.4"/></svg>
<svg style="left:209px;top:757px" width="15" height="15"><rect x="0.5" y="0.5" width="14" height="14" fill="#f4f8fc" stroke="#8098c0"/><rect x="0" y="0" width="15" height="2.5" fill="#5080e0"/><rect x="2" y="4.0" width="1.2" height="1.2" fill="#40a020"/><path d="M4.5 4.6 L13 4.6" stroke="#607080"/><rect x="2" y="6.2" width="1.2" height="1.2" fill="#40a020"/><path d="M4.5 6.8 L10 6.8" stroke="#607080"/><rect x="2" y="8.4" width="1.2" height="1.2" fill="#40a020"/><path d="M4.5 9.0 L13 9.0" stroke="#607080"/><rect x="2" y="10.600000000000001" width="1.2" height="1.2" fill="#40a020"/><path d="M4.5 11.2 L10 11.2" stroke="#607080"/><rect x="2" y="12.8" width="1.2" height="1.2" fill="#40a020"/><path d="M4.5 13.4 L13 13.4" stroke="#607080"/></svg>
<svg style="left:227px;top:764px" width="6" height="4"><path d="M0 0 L5.5 0 L2.75 3 Z" fill="#000"/></svg>
<svg style="left:239px;top:757px" width="16" height="15"><rect x="0.5" y="0.5" width="15" height="14" fill="#eef2fa" stroke="#8098c0"/><rect x="0" y="0" width="16" height="2.5" fill="#5080e0"/><path d="M4 8 Q4 4.5 8 4.5 L10.5 4.5 M12 7 Q12 11 8 11 L5.5 11" stroke="#50a020" stroke-width="1.6" fill="none"/><path d="M9.5 2.5 L12 4.5 L9.5 6.5 Z M6.5 9 L4 11 L6.5 13 Z" fill="#50a020"/></svg>
<div class="a" style="left:207px;top:778px;width:1180px;height:23px;background:#efefef"></div>
<div class="a" style="left:207px;top:801px;width:1180px;height:1px;background:#a0a0a8"></div>
<svg style="left:210px;top:782px" width="16" height="14"><rect x="0.5" y="0.5" width="15" height="13" fill="#f8f8ff" stroke="#405070"/><rect x="0.5" y="0.5" width="3" height="13" fill="#e0c070" stroke="#806030" stroke-width="0.5"/><path d="M1 3.5 L15 3.5" stroke="#405070"/><path d="M1 6.5 L15 6.5" stroke="#405070"/><path d="M1 9.5 L15 9.5" stroke="#405070"/><path d="M1 12.5 L15 12.5" stroke="#405070"/></svg>
<div class="t" style="left:233px;top:783px;color:#1e1e1e">ProofOfMailingReport Groups</div>
<div class="a" style="left:207px;top:802px;width:1180px;height:96px;background:#fff"></div>
<div class="t" style="left:215px;top:808px;color:#1e1e1e">Name</div>
<div class="t" style="left:375px;top:808px;color:#1e1e1e">Header</div>
<div class="t" style="left:535px;top:808px;color:#1e1e1e">Footer</div>
<div class="t" style="left:695px;top:808px;color:#1e1e1e">Grouping</div>
<div class="t" style="left:775px;top:808px;color:#1e1e1e">Filter</div>
<div class="t" style="left:855px;top:808px;color:#1e1e1e">Sorting</div>
<div class="a" style="left:368px;top:803px;width:1px;height:22px;background:#e6e6e6"></div>
<div class="a" style="left:368px;top:825px;width:1px;height:73px;background:#ededed"></div>
<div class="a" style="left:528px;top:803px;width:1px;height:22px;background:#e6e6e6"></div>
<div class="a" style="left:528px;top:825px;width:1px;height:73px;background:#ededed"></div>
<div class="a" style="left:688px;top:803px;width:1px;height:22px;background:#e6e6e6"></div>
<div class="a" style="left:688px;top:825px;width:1px;height:73px;background:#ededed"></div>
<div class="a" style="left:768px;top:803px;width:1px;height:22px;background:#e6e6e6"></div>
<div class="a" style="left:768px;top:825px;width:1px;height:73px;background:#ededed"></div>
<div class="a" style="left:848px;top:803px;width:1px;height:22px;background:#e6e6e6"></div>
<div class="a" style="left:848px;top:825px;width:1px;height:73px;background:#ededed"></div>
<div class="a" style="left:1008px;top:803px;width:1px;height:22px;background:#e6e6e6"></div>
<div class="a" style="left:1008px;top:825px;width:1px;height:73px;background:#f0f0f0"></div>
<div class="a" style="left:210px;top:845px;width:1175px;height:1px;background:#ececec"></div>
<div class="a" style="left:210px;top:864px;width:1175px;height:1px;background:#ececec"></div>
<div class="a" style="left:210px;top:883px;width:1175px;height:1px;background:#ececec"></div>
<svg style="left:215px;top:829px" width="13" height="14"><rect x="0.5" y="0.5" width="12" height="13" fill="#eef2f6" stroke="#607890"/><rect x="2.0" y="3.0" width="1.6" height="1.4" fill="#f05a20"/><rect x="2.0" y="5.5" width="1.6" height="1.4" fill="#f05a20"/><rect x="2.0" y="8.0" width="1.6" height="1.4" fill="#f05a20"/><rect x="2.0" y="10.5" width="1.6" height="1.4" fill="#f05a20"/><rect x="4.5" y="3.0" width="1.6" height="1.4" fill="#f05a20"/><rect x="4.5" y="5.5" width="1.6" height="1.4" fill="#f05a20"/><rect x="4.5" y="8.0" width="1.6" height="1.4" fill="#f05a20"/><rect x="4.5" y="10.5" width="1.6" height="1.4" fill="#f05a20"/><rect x="7.0" y="3.0" width="1.6" height="1.4" fill="#f05a20"/><rect x="7.0" y="5.5" width="1.6" height="1.4" fill="#f05a20"/><rect x="7.0" y="8.0" width="1.6" height="1.4" fill="#f05a20"/><rect x="7.0" y="10.5" width="1.6" height="1.4" fill="#f05a20"/><rect x="9.5" y="3.0" width="1.6" height="1.4" fill="#f05a20"/><rect x="9.5" y="5.5" width="1.6" height="1.4" fill="#f05a20"/><rect x="9.5" y="8.0" width="1.6" height="1.4" fill="#f05a20"/><rect x="9.5" y="10.5" width="1.6" height="1.4" fill="#f05a20"/></svg>
<div class="t" style="left:231px;top:831px;color:#1e1e1e">Detail</div>
<div class="a" style="left:207px;top:898px;width:1180px;height:10px;background:#3f3f46"></div>
</div>

<!-- ============ OUTPUT ============ -->
<div id="output">
<div class="a" style="left:206px;top:907px;width:1182px;height:183px;background:#2d2d30;border-left:1px solid #3f3f46;border-right:1px solid #3f3f46"></div>
<div class="t" style="left:211px;top:911px">Output</div>
<svg style="left:257px;top:915px" width="1078" height="5"><rect width="1078" height="5" fill="url(#dp)"/></svg>
<svg style="left:1339px;top:915px" width="9" height="5"><path d="M0 0 L8 0 L4 4.5 Z" fill="#f1f1f1"/></svg><svg style="left:1356px;top:912px" width="8" height="12"><path d="M1.5 0.5 L6 0.5 M1.5 0.5 L1.5 6" stroke="#f1f1f1" stroke-width="1" fill="none"/><rect x="4" y="0" width="2.5" height="6" fill="#f1f1f1"/><rect x="0" y="6" width="7.5" height="1.5" fill="#f1f1f1"/><rect x="3.2" y="7" width="1.2" height="4.5" fill="#f1f1f1"/></svg><svg style="left:1371px;top:913px" width="10" height="9"><path d="M0.5 0.5 L9.5 8.5 M9.5 0.5 L0.5 8.5" stroke="#f1f1f1" stroke-width="1.4"/></svg>
<div class="t" style="left:214px;top:935px">Show output from:</div>
<div class="a" style="left:320px;top:931px;width:301px;height:20px;border:1px solid #434346;background:#333337"></div>
<svg style="left:609px;top:940px" width="7" height="4"><path d="M0 0 L6 0 L3 3 Z" fill="#999"/></svg>
<div class="a" style="left:627px;top:933px;width:1px;height:17px;background:#3f3f46"></div>
<svg style="left:636px;top:934px" width="14" height="15"><path d="M7 1.5 Q3 0.5 2.5 4.5" stroke="#5a5a5a" stroke-width="1.5" fill="none"/><path d="M0.5 3.5 L2.5 6.5 L4.5 3.5 Z" fill="#5a5a5a"/><rect x="5" y="7" width="8" height="1" fill="#5a5a5a"/><rect x="2" y="9" width="6" height="3" fill="#5a5a5a"/><rect x="2" y="13" width="11" height="1" fill="#5a5a5a"/></svg>
<div class="a" style="left:657px;top:933px;width:1px;height:17px;background:#3f3f46"></div>
<svg style="left:666px;top:934px" width="13" height="14"><path d="M3.5 1 L0.5 3.5 L3.5 6 M1 3.5 L6 3.5" stroke="#5a5a5a" stroke-width="1.6" fill="none"/><rect x="6" y="6" width="7" height="1" fill="#5a5a5a"/><rect x="2" y="9" width="11" height="1" fill="#5a5a5a"/><rect x="2" y="12" width="11" height="1" fill="#5a5a5a"/></svg>
<svg style="left:688px;top:934px" width="13" height="14"><path d="M2.5 1 L5.5 3.5 L2.5 6 M0 3.5 L5 3.5" stroke="#5a5a5a" stroke-width="1.6" fill="none"/><rect x="6" y="6" width="7" height="1" fill="#5a5a5a"/><rect x="2" y="9" width="11" height="1" fill="#5a5a5a"/><rect x="2" y="12" width="11" height="1" fill="#5a5a5a"/></svg>
<div class="a" style="left:709px;top:933px;width:1px;height:17px;background:#3f3f46"></div>
<svg style="left:718px;top:934px" width="14" height="15"><path d="M0.5 0.5 L7 7 M7 0.5 L0.5 7" stroke="#5a5a5a" stroke-width="1.2"/><rect x="8" y="1" width="5" height="1" fill="#5a5a5a"/><rect x="8" y="4" width="5" height="1" fill="#5a5a5a"/><rect x="1" y="8" width="12" height="1.5" fill="#5a5a5a"/><rect x="1" y="12" width="12" height="1.5" fill="#5a5a5a"/></svg>
<div class="a" style="left:739px;top:933px;width:1px;height:17px;background:#3f3f46"></div>
<svg style="left:746px;top:934px" width="17" height="15"><path d="M0.5 1.5 L3 1.5 L3 5 L0.5 5 L0.5 3.5 L3 3.5 M4.5 0 L4.5 5 L7 5 L7 3 L4.5 3 M3 8 L0.5 8 L0.5 12 L3 12" stroke="#dcdcdc" stroke-width="1" fill="none"/><path d="M14.5 3 L14.5 9.5 L8 9.5" stroke="#dcdcdc" stroke-width="1.6" fill="none"/><path d="M10 6.5 L7 9.5 L10 12.5" stroke="#dcdcdc" stroke-width="1.6" fill="none"/></svg>
<div class="a" style="left:207px;top:954px;width:1180px;height:135px;background:#252526"></div>
<div class="a" style="left:206px;top:1089px;width:1182px;height:1px;background:#3f3f46"></div>
<div class="t" style="left:211px;top:1093px">Error List</div>
<div class="a" style="left:262px;top:1089px;width:50px;height:21px;background:#252526;border:1px solid #3f3f46;border-top:none"></div>
<div class="t" style="left:268px;top:1092px;color:#3399ff">Output</div>
<div class="t" style="left:317px;top:1093px">Find Results 1</div>
</div>

<!-- ============ RIGHT PANELS ============ -->
<div id="right">
<div class="a" style="left:1394px;top:64px;width:515px;height:584px;border:1px solid #3f3f46;background:#fff"></div>
<div class="a" style="left:1395px;top:65px;width:513px;height:21px;background:#2d2d30"></div>
<div class="t" style="left:1399px;top:69px">Report Explorer</div>
<svg style="left:1487px;top:73px" width="365" height="5"><rect width="365" height="5" fill="url(#dp)"/></svg>
<svg style="left:1860px;top:73px" width="9" height="5"><path d="M0 0 L8 0 L4 4.5 Z" fill="#f1f1f1"/></svg><svg style="left:1877px;top:70px" width="8" height="12"><path d="M1.5 0.5 L6 0.5 M1.5 0.5 L1.5 6" stroke="#f1f1f1" stroke-width="1" fill="none"/><rect x="4" y="0" width="2.5" height="6" fill="#f1f1f1"/><rect x="0" y="6" width="7.5" height="1.5" fill="#f1f1f1"/><rect x="3.2" y="7" width="1.2" height="4.5" fill="#f1f1f1"/></svg><svg style="left:1892px;top:71px" width="10" height="9"><path d="M0.5 0.5 L9.5 8.5 M9.5 0.5 L0.5 8.5" stroke="#f1f1f1" stroke-width="1.4"/></svg>
<div class="a" style="left:1395px;top:86px;width:1px;height:561px;background:#a0a0a0"></div><div class="a" style="left:1395px;top:86px;width:513px;height:1px;background:#8a929c"></div>
<div class="a" style="left:1438px;top:88px;width:121px;height:18px;background:#efefef"></div>
<div class="a" style="left:1427px;top:106px;width:1px;height:297px;background-image:linear-gradient(to bottom,#808080 50%,transparent 50%);background-size:1px 2px"></div>
<div class="a" style="left:1446px;top:141px;width:1px;height:12px;background-image:linear-gradient(to bottom,#808080 50%,transparent 50%);background-size:1px 2px"></div>
<div class="a" style="left:1446px;top:177px;width:1px;height:12px;background-image:linear-gradient(to bottom,#808080 50%,transparent 50%);background-size:1px 2px"></div>
<div class="a" style="left:1446px;top:213px;width:1px;height:172px;background-image:linear-gradient(to bottom,#808080 50%,transparent 50%);background-size:1px 2px"></div>
<div class="a" style="left:1465px;top:249px;width:1px;height:64px;background-image:linear-gradient(to bottom,#808080 50%,transparent 50%);background-size:1px 2px"></div>
<div class="a" style="left:1484px;top:321px;width:1px;height:28px;background-image:linear-gradient(to bottom,#808080 50%,transparent 50%);background-size:1px 2px"></div>
<div class="a" style="left:1446px;top:411px;width:1px;height:10px;background-image:linear-gradient(to bottom,#808080 50%,transparent 50%);background-size:1px 2px"></div>
<div class="a" style="left:1413px;top:98px;width:8px;height:1px;background-image:linear-gradient(to right,#808080 50%,transparent 50%);background-size:2px 1px"></div>
<svg style="left:1404px;top:94px" width="9" height="9"><rect x="0.5" y="0.5" width="8" height="8" rx="1" fill="#f4f4f4" stroke="#909090"/><path d="M2 4.5 L7 4.5" stroke="#3050b0" stroke-width="1.2"/></svg>
<svg style="left:1421px;top:90px" width="16" height="16"><rect x="0.5" y="0.5" width="11" height="14" rx="1" fill="#f4f8fb" stroke="#3a5a70"/><rect x="2" y="6" width="1" height="4" fill="#ff6010"/><rect x="4" y="3" width="1" height="7" fill="#ff6010"/><rect x="6" y="5" width="1" height="5" fill="#ff6010"/><rect x="8" y="4" width="2" height="1" fill="#6a90b0"/><rect x="8" y="6" width="2" height="1" fill="#6a90b0"/><rect x="8" y="8" width="2" height="1" fill="#6a90b0"/><rect x="2" y="11" width="2" height="1" fill="#6a90b0"/><rect x="5" y="11" width="5" height="1" fill="#6a90b0"/><rect x="2" y="13" width="2" height="1" fill="#6a90b0"/><rect x="5" y="13" width="5" height="1" fill="#6a90b0"/></svg>
<div class="t" style="left:1440px;top:90px;color:#1e1e1e">ProofOfMailingReport</div>
<div class="a" style="left:1427px;top:116px;width:11px;height:1px;background-image:linear-gradient(to right,#808080 50%,transparent 50%);background-size:2px 1px"></div>
<svg style="left:1438px;top:108px" width="16" height="16"><rect x="0.5" y="0.5" width="14" height="14" fill="#eef4f4" stroke="#5a9090"/><path d="M3 3.5 L5.5 3.5 M3 6 L5.5 6 M3 8.5 L5.5 8.5 M3 11 L5.5 11" stroke="#e04010" stroke-width="1.2"/><path d="M7 3.5 L12 3.5 M7 6 L12 6 M7 8.5 L10 8.5" stroke="#e0a060" stroke-width="1.2"/><path d="M8 9 L12 13 M12 9 L8 13 M7.5 9 L9.5 9 M10.5 13 L12.5 13" stroke="#000" stroke-width="1"/></svg>
<div class="t" style="left:1459px;top:108px;color:#1e1e1e">[Parameters]</div>
<div class="a" style="left:1432px;top:134px;width:6px;height:1px;background-image:linear-gradient(to right,#808080 50%,transparent 50%);background-size:2px 1px"></div>
<svg style="left:1423px;top:130px" width="9" height="9"><rect x="0.5" y="0.5" width="8" height="8" rx="1" fill="#f4f4f4" stroke="#909090"/><path d="M2 4.5 L7 4.5" stroke="#3050b0" stroke-width="1.2"/></svg>
<svg style="left:1438px;top:126px" width="16" height="16"><path d="M2 6 Q3 1 9 1.5 Q15 2.5 15 7 Q14 9 11 9 Q9 10 10 12 Q10 14 6 14 Q0 13 2 6 Z" fill="#9ccaca" stroke="#5a8a8a" stroke-width="0.8"/><circle cx="6" cy="3.5" r="1.8" fill="#e02020"/><circle cx="10" cy="3.5" r="1.8" fill="#e0c020"/><circle cx="13" cy="6.5" r="1.6" fill="#3080e0"/><circle cx="7.5" cy="9.5" r="0.9" fill="#fff"/></svg>
<div class="t" style="left:1459px;top:126px;color:#1e1e1e">[Styles]</div>
<div class="a" style="left:1446px;top:152px;width:11px;height:1px;background-image:linear-gradient(to right,#808080 50%,transparent 50%);background-size:2px 1px"></div>
<svg style="left:1457px;top:144px" width="16" height="16"><path d="M2 6 Q3 1 9 1.5 Q15 2.5 15 7 Q14 9 11 9 Q9 10 10 12 Q10 14 6 14 Q0 13 2 6 Z" fill="#9ccaca" stroke="#5a8a8a" stroke-width="0.8"/><circle cx="6" cy="3.5" r="1.8" fill="#e02020"/><circle cx="10" cy="3.5" r="1.8" fill="#e0c020"/><circle cx="13" cy="6.5" r="1.6" fill="#3080e0"/><circle cx="7.5" cy="9.5" r="0.9" fill="#fff"/></svg>
<div class="t" style="left:1478px;top:144px;color:#1e1e1e">TextItemBase, HtmlTextBox</div>
<div class="a" style="left:1432px;top:170px;width:8px;height:1px;background-image:linear-gradient(to right,#808080 50%,transparent 50%);background-size:2px 1px"></div>
<svg style="left:1423px;top:166px" width="9" height="9"><rect x="0.5" y="0.5" width="8" height="8" rx="1" fill="#f4f4f4" stroke="#909090"/><path d="M2 4.5 L7 4.5" stroke="#3050b0" stroke-width="1.2"/></svg>
<svg style="left:1440px;top:162px" width="16" height="16"><path d="M0.5 0.5 L9 0.5 L12.5 4 L12.5 15.5 L0.5 15.5 Z" fill="#f0f4f8" stroke="#607890"/><rect x="2" y="3" width="8" height="4" fill="#f05a10"/><path d="M2.5 9.5 L4.5 9.5 M5.5 9.5 L7.5 9.5 M8.5 9.5 L10.5 9.5 M2.5 12 L4.5 12 M5.5 12 L7.5 12 M8.5 12 L10.5 12" stroke="#7890a8" stroke-width="1.2"/></svg>
<div class="t" style="left:1459px;top:162px;color:#1e1e1e">pageHeaderSection1</div>
<div class="a" style="left:1446px;top:188px;width:11px;height:1px;background-image:linear-gradient(to right,#808080 50%,transparent 50%);background-size:2px 1px"></div>
<svg style="left:1457px;top:180px" width="16" height="16"><rect x="0.5" y="0.5" width="15" height="15" fill="#fff" stroke="#404040" stroke-dasharray="1.5,1"/><path d="M6 4.5 L3 8 L6 11.5 M10 4.5 L13 8 L10 11.5" stroke="#000" stroke-width="1.3" fill="none"/></svg>
<div class="t" style="left:1478px;top:180px;color:#1e1e1e">htmlTextBox15</div>
<div class="a" style="left:1432px;top:206px;width:8px;height:1px;background-image:linear-gradient(to right,#808080 50%,transparent 50%);background-size:2px 1px"></div>
<svg style="left:1423px;top:202px" width="9" height="9"><rect x="0.5" y="0.5" width="8" height="8" rx="1" fill="#f4f4f4" stroke="#909090"/><path d="M2 4.5 L7 4.5" stroke="#3050b0" stroke-width="1.2"/></svg>
<svg style="left:1440px;top:198px" width="16" height="16"><rect x="0.5" y="0.5" width="12" height="15" fill="#f0f4f8" stroke="#607890"/><rect x="2.0" y="3.0" width="1.6" height="1.5" fill="#f05a10"/><rect x="2.0" y="5.6" width="1.6" height="1.5" fill="#f05a10"/><rect x="2.0" y="8.2" width="1.6" height="1.5" fill="#f05a10"/><rect x="2.0" y="10.8" width="1.6" height="1.5" fill="#f05a10"/><rect x="4.4" y="3.0" width="1.6" height="1.5" fill="#f05a10"/><rect x="4.4" y="5.6" width="1.6" height="1.5" fill="#f05a10"/><rect x="4.4" y="8.2" width="1.6" height="1.5" fill="#f05a10"/><rect x="4.4" y="10.8" width="1.6" height="1.5" fill="#f05a10"/><rect x="6.8" y="3.0" width="1.6" height="1.5" fill="#f05a10"/><rect x="6.8" y="5.6" width="1.6" height="1.5" fill="#f05a10"/><rect x="6.8" y="8.2" width="1.6" height="1.5" fill="#f05a10"/><rect x="6.8" y="10.8" width="1.6" height="1.5" fill="#f05a10"/><rect x="9.2" y="3.0" width="1.6" height="1.5" fill="#f05a10"/><rect x="9.2" y="5.6" width="1.6" height="1.5" fill="#f05a10"/><rect x="9.2" y="8.2" width="1.6" height="1.5" fill="#f05a10"/><rect x="9.2" y="10.8" width="1.6" height="1.5" fill="#f05a10"/></svg>
<div class="t" style="left:1459px;top:198px;color:#1e1e1e">detail</div>
<div class="a" style="left:1446px;top:224px;width:11px;height:1px;background-image:linear-gradient(to right,#808080 50%,transparent 50%);background-size:2px 1px"></div>
<svg style="left:1457px;top:216px" width="16" height="16"><rect x="0.5" y="0.5" width="15" height="14" fill="#eef4f8" stroke="#7090a8"/><path d="M3 3.5 L13 3.5" stroke="#7090a8" stroke-width="1"/><path d="M3 5.7 L13 5.7" stroke="#7090a8" stroke-width="1"/><path d="M3 7.9 L13 7.9" stroke="#7090a8" stroke-width="1"/><path d="M3 10.100000000000001 L13 10.100000000000001" stroke="#7090a8" stroke-width="1"/><path d="M3 12.3 L13 12.3" stroke="#7090a8" stroke-width="1"/></svg>
<div class="t" style="left:1478px;top:216px;color:#1e1e1e">panel1</div>
<div class="a" style="left:1451px;top:242px;width:6px;height:1px;background-image:linear-gradient(to right,#808080 50%,transparent 50%);background-size:2px 1px"></div>
<svg style="left:1442px;top:238px" width="9" height="9"><rect x="0.5" y="0.5" width="8" height="8" rx="1" fill="#f4f4f4" stroke="#909090"/><path d="M2 4.5 L7 4.5" stroke="#3050b0" stroke-width="1.2"/></svg>
<svg style="left:1457px;top:234px" width="16" height="16"><rect x="0.5" y="0.5" width="15" height="14" fill="#eef4f8" stroke="#7090a8"/><path d="M3 3.5 L6 3.5 M8 3.5 L13 3.5" stroke="#6a98c8" stroke-width="1.2"/><path d="M3 6.0 L6 6.0 M8 6.0 L13 6.0" stroke="#6a98c8" stroke-width="1.2"/><path d="M3 8.5 L6 8.5 M8 8.5 L13 8.5" stroke="#6a98c8" stroke-width="1.2"/><path d="M3 11.0 L6 11.0 M8 11.0 L13 11.0" stroke="#6a98c8" stroke-width="1.2"/></svg>
<div class="t" style="left:1478px;top:234px;color:#1e1e1e">list1</div>
<div class="a" style="left:1470px;top:260px;width:6px;height:1px;background-image:linear-gradient(to right,#808080 50%,transparent 50%);background-size:2px 1px"></div>
<svg style="left:1461px;top:256px" width="9" height="9"><rect x="0.5" y="0.5" width="8" height="8" rx="1" fill="#f4f4f4" stroke="#909090"/><path d="M2 4.5 L7 4.5 M4.5 2 L4.5 7" stroke="#3050b0" stroke-width="1.1"/></svg>
<svg style="left:1476px;top:252px" width="16" height="16"><rect x="0.5" y="0.5" width="15" height="14" fill="#f8f8f8" stroke="#405060"/><rect x="0.5" y="0.5" width="3" height="14" fill="#e0c070" stroke="#806030" stroke-width="0.6"/><path d="M1 3.5 L15 3.5" stroke="#405060"/><path d="M1 6.5 L15 6.5" stroke="#405060"/><path d="M1 9.5 L15 9.5" stroke="#405060"/><path d="M1 12.5 L15 12.5" stroke="#405060"/></svg>
<div class="t" style="left:1497px;top:252px;color:#1e1e1e">[Row Groups]</div>
<div class="a" style="left:1470px;top:278px;width:6px;height:1px;background-image:linear-gradient(to right,#808080 50%,transparent 50%);background-size:2px 1px"></div>
<svg style="left:1461px;top:274px" width="9" height="9"><rect x="0.5" y="0.5" width="8" height="8" rx="1" fill="#f4f4f4" stroke="#909090"/><path d="M2 4.5 L7 4.5 M4.5 2 L4.5 7" stroke="#3050b0" stroke-width="1.1"/></svg>
<svg style="left:1476px;top:270px" width="16" height="16"><rect x="0.5" y="0.5" width="15" height="14" fill="#f8f8f8" stroke="#405060"/><rect x="0.5" y="0.5" width="15" height="3" fill="#e0c070" stroke="#806030" stroke-width="0.6"/><path d="M3.5 1 L3.5 15" stroke="#405060"/><path d="M6.5 1 L6.5 15" stroke="#405060"/><path d="M9.5 1 L9.5 15" stroke="#405060"/><path d="M12.5 1 L12.5 15" stroke="#405060"/></svg>
<div class="t" style="left:1497px;top:270px;color:#1e1e1e">[Column Groups]</div>
<div class="a" style="left:1465px;top:296px;width:11px;height:1px;background-image:linear-gradient(to right,#808080 50%,transparent 50%);background-size:2px 1px"></div>
<svg style="left:1476px;top:288px" width="16" height="16"><rect x="0.5" y="0.5" width="15" height="15" fill="#fff" stroke="#404040" stroke-dasharray="1.5,1"/><text x="1.5" y="12" font-size="10" font-weight="bold" fill="#000" font-family="Liberation Sans">ab</text></svg>
<div class="t" style="left:1497px;top:288px;color:#1e1e1e">textBox3</div>
<div class="a" style="left:1470px;top:314px;width:6px;height:1px;background-image:linear-gradient(to right,#808080 50%,transparent 50%);background-size:2px 1px"></div>
<svg style="left:1461px;top:310px" width="9" height="9"><rect x="0.5" y="0.5" width="8" height="8" rx="1" fill="#f4f4f4" stroke="#909090"/><path d="M2 4.5 L7 4.5" stroke="#3050b0" stroke-width="1.2"/></svg>
<svg style="left:1476px;top:306px" width="16" height="16"><rect x="0.5" y="0.5" width="15" height="14" fill="#eef4f8" stroke="#7090a8"/><path d="M3 3.5 L13 3.5" stroke="#7090a8" stroke-width="1"/><path d="M3 5.7 L13 5.7" stroke="#7090a8" stroke-width="1"/><path d="M3 7.9 L13 7.9" stroke="#7090a8" stroke-width="1"/><path d="M3 10.100000000000001 L13 10.100000000000001" stroke="#7090a8" stroke-width="1"/><path d="M3 12.3 L13 12.3" stroke="#7090a8" stroke-width="1"/></svg>
<div class="t" style="left:1497px;top:306px;color:#1e1e1e">panel7</div>
<div class="a" style="left:1484px;top:332px;width:11px;height:1px;background-image:linear-gradient(to right,#808080 50%,transparent 50%);background-size:2px 1px"></div>
<svg style="left:1495px;top:324px" width="16" height="16"><rect x="0.5" y="0.5" width="15" height="15" fill="#fff" stroke="#404040" stroke-dasharray="1.5,1"/><text x="1.5" y="12" font-size="10" font-weight="bold" fill="#000" font-family="Liberation Sans">ab</text></svg>
<div class="t" style="left:1516px;top:324px;color:#1e1e1e">textBox18</div>
<div class="a" style="left:1484px;top:350px;width:11px;height:1px;background-image:linear-gradient(to right,#808080 50%,transparent 50%);background-size:2px 1px"></div>
<svg style="left:1495px;top:342px" width="16" height="16"><rect x="0.5" y="0.5" width="15" height="15" fill="#fff" stroke="#404040" stroke-dasharray="1.5,1"/><text x="1.5" y="12" font-size="10" font-weight="bold" fill="#000" font-family="Liberation Sans">ab</text></svg>
<div class="t" style="left:1516px;top:342px;color:#1e1e1e">textBox23</div>
<div class="a" style="left:1446px;top:368px;width:11px;height:1px;background-image:linear-gradient(to right,#808080 50%,transparent 50%);background-size:2px 1px"></div>
<svg style="left:1457px;top:360px" width="16" height="16"><rect x="0.5" y="0.5" width="15" height="15" fill="#fff" stroke="#404040" stroke-dasharray="1.5,1"/><text x="1.5" y="12" font-size="10" font-weight="bold" fill="#000" font-family="Liberation Sans">ab</text></svg>
<div class="t" style="left:1478px;top:360px;color:#1e1e1e">textBox10</div>
<div class="a" style="left:1446px;top:386px;width:11px;height:1px;background-image:linear-gradient(to right,#808080 50%,transparent 50%);background-size:2px 1px"></div>
<svg style="left:1457px;top:378px" width="16" height="16"><rect x="0.5" y="0.5" width="15" height="15" fill="#fff" stroke="#404040" stroke-dasharray="1.5,1"/><text x="1.5" y="12" font-size="10" font-weight="bold" fill="#000" font-family="Liberation Sans">ab</text></svg>
<div class="t" style="left:1478px;top:378px;color:#1e1e1e">textBox9</div>
<div class="a" style="left:1432px;top:404px;width:8px;height:1px;background-image:linear-gradient(to right,#808080 50%,transparent 50%);background-size:2px 1px"></div>
<svg style="left:1423px;top:400px" width="9" height="9"><rect x="0.5" y="0.5" width="8" height="8" rx="1" fill="#f4f4f4" stroke="#909090"/><path d="M2 4.5 L7 4.5" stroke="#3050b0" stroke-width="1.2"/></svg>
<svg style="left:1440px;top:396px" width="16" height="16"><path d="M0.5 0.5 L9 0.5 L12.5 4 L12.5 15.5 L0.5 15.5 Z" fill="#f0f4f8" stroke="#607890"/><rect x="2" y="11" width="9" height="3" fill="#f05a10"/><path d="M2.5 5 L10.5 5 M2.5 7 L10.5 7 M2.5 9 L10.5 9" stroke="#7890a8" stroke-width="1"/></svg>
<div class="t" style="left:1459px;top:396px;color:#1e1e1e">pageFooterSection1</div>
<div class="a" style="left:1446px;top:422px;width:11px;height:1px;background-image:linear-gradient(to right,#808080 50%,transparent 50%);background-size:2px 1px"></div>
<svg style="left:1457px;top:414px" width="16" height="16"><rect x="0.5" y="0.5" width="15" height="15" fill="#fff" stroke="#404040" stroke-dasharray="1.5,1"/><path d="M6 4.5 L3 8 L6 11.5 M10 4.5 L13 8 L10 11.5" stroke="#000" stroke-width="1.3" fill="none"/></svg>
<div class="t" style="left:1478px;top:414px;color:#1e1e1e">htmlTextBox1</div>
<div class="a" style="left:1908px;top:64px;width:7px;height:590px;background:#2d2d30"></div>
<div class="a" style="left:1893px;top:250px;width:40px;height:40px;border-radius:50%;background:radial-gradient(circle at 40% 50%,#fffbe0 0%,#f8eeb0 60%,#e8d890 100%);opacity:0.9"></div>
<div class="t" style="left:1399px;top:651px">Solution Explorer</div>
<div class="t" style="left:1498px;top:651px">Team Explorer</div>
<div class="t" style="left:1582px;top:651px">Class View</div>
<div class="a" style="left:1643px;top:647px;width:91px;height:21px;background:#252526;border:1px solid #3f3f46;border-top:none"></div>
<div class="t" style="left:1648px;top:650px;color:#3399ff">Report Explorer</div>
<div class="a" style="left:1395px;top:668px;width:513px;height:7px;background:#3f3f46"></div>
<div class="a" style="left:1394px;top:675px;width:515px;height:435px;border:1px solid #3f3f46;background:#2d2d30"></div>
<div class="t" style="left:1399px;top:679px">Properties</div>
<svg style="left:1460px;top:683px" width="392" height="5"><rect width="392" height="5" fill="url(#dp)"/></svg>
<svg style="left:1860px;top:683px" width="9" height="5"><path d="M0 0 L8 0 L4 4.5 Z" fill="#f1f1f1"/></svg><svg style="left:1877px;top:680px" width="8" height="12"><path d="M1.5 0.5 L6 0.5 M1.5 0.5 L1.5 6" stroke="#f1f1f1" stroke-width="1" fill="none"/><rect x="4" y="0" width="2.5" height="6" fill="#f1f1f1"/><rect x="0" y="6" width="7.5" height="1.5" fill="#f1f1f1"/><rect x="3.2" y="7" width="1.2" height="4.5" fill="#f1f1f1"/></svg><svg style="left:1892px;top:681px" width="10" height="9"><path d="M0.5 0.5 L9.5 8.5 M9.5 0.5 L0.5 8.5" stroke="#f1f1f1" stroke-width="1.4"/></svg>
<div class="a" style="left:1395px;top:696px;width:513px;height:24px;background:#333337"></div>
<div class="t b" style="left:1401px;top:701px">TestReport</div>
<div class="t" style="left:1470px;top:701px">Telerik.Reporting.Report</div>
<svg style="left:1898px;top:707px" width="7" height="4"><path d="M0 0 L6 0 L3 3 Z" fill="#f1f1f1"/></svg>
<div class="a" style="left:1398px;top:722px;width:23px;height:22px;border:1px solid #3399ff;background:#2a2a2c"></div>
<svg style="left:1401px;top:725px" width="17" height="16"><rect x="1" y="1" width="4" height="4" fill="#c8c8c8"/><rect x="1" y="10" width="4" height="4" fill="#c8c8c8"/><path d="M2 3 L4 3 M3 2 L3 4 M2 12 L4 12 M3 11 L3 13" stroke="#2d2d30" stroke-width="0.8"/><path d="M7 1.5 L12 1.5 M7 3.5 L12 3.5 M7 5.5 L12 5.5 M7 7.5 L12 7.5 M7 10.5 L12 10.5 M7 12.5 L12 12.5 M13 3.5 L15 3.5 M13 5.5 L15 5.5 M13 7.5 L15 7.5 M13 12.5 L14 12.5" stroke="#c8c8c8" stroke-width="1"/></svg>
<svg style="left:1425px;top:725px" width="16" height="16"><rect x="0.5" y="0.5" width="7" height="7" fill="#c8c8c8"/><text x="1" y="7" font-size="7.5" font-weight="bold" fill="#2d2d30" font-family="Liberation Sans">A</text><text x="1" y="15" font-size="8" font-weight="bold" fill="#c8c8c8" font-family="Liberation Sans">Z</text><path d="M11.5 4 L11.5 12 M8.5 9 L11.5 13 L14.5 9" stroke="#3ab0f0" stroke-width="2" fill="none"/></svg>
<div class="a" style="left:1447px;top:724px;width:1px;height:19px;background:#3f3f46"></div>
<div class="a" style="left:1450px;top:722px;width:23px;height:22px;border:1px solid #3399ff;background:#2a2a2c"></div>
<svg style="left:1453px;top:725px" width="17" height="16"><path d="M5 3 L12 3 L15 6 L15 13 L7 13" stroke="#c8c8c8" stroke-width="1.2" fill="none"/><path d="M12 1 L15 4" stroke="#c8c8c8"/><path d="M3 1 L3 5 M1 5 Q1 8 3 8 Q5 8 5 5 M3 8 L3 14 M1.5 14 L4.5 14" stroke="#c8c8c8" stroke-width="1.6" fill="none"/></svg>
<svg style="left:1477px;top:725px" width="14" height="16"><path d="M9 0 L3 8 L7 8 L4 15 L12 6 L8 6 L11 0 Z" fill="none" stroke="#c8c8c8" stroke-width="1.2"/></svg>
<div class="a" style="left:1499px;top:724px;width:1px;height:19px;background:#3f3f46"></div>
<svg style="left:1505px;top:725px" width="16" height="16"><path d="M2 14 L8 8" stroke="#707070" stroke-width="2.6"/><circle cx="11" cy="5" r="4" fill="#707070"/><path d="M11 1 L14 4" stroke="#2d2d30" stroke-width="2"/></svg>
<div class="a" style="left:1395px;top:746px;width:513px;height:300px;background:#2d2d30;overflow:hidden">
<div class="a" style="left:15px;top:2px;width:233px;height:18px;background:#252526"></div>
<div class="a" style="left:249px;top:2px;width:245px;height:18px;background:#252526"></div>
<svg style="left:3px;top:7px" width="9" height="9"><rect x="0.5" y="0.5" width="8" height="8" fill="none" stroke="#f1f1f1"/><path d="M2 4.5 L7 4.5 M4.5 2 L4.5 7" stroke="#f1f1f1" stroke-width="1.2"/></svg>
<div class="t" style="left:19px;top:4px">StyleSheet</div>
<div class="t b" style="left:252px;top:4px">(1 StyleRule)</div>
<div class="a" style="left:15px;top:21px;width:233px;height:18px;background:#252526"></div>
<div class="a" style="left:249px;top:21px;width:245px;height:18px;background:#252526"></div>
<svg style="left:3px;top:26px" width="9" height="9"><rect x="0.5" y="0.5" width="8" height="8" fill="none" stroke="#f1f1f1"/><path d="M2 4.5 L7 4.5 M4.5 2 L4.5 7" stroke="#f1f1f1" stroke-width="1.2"/></svg>
<div class="t" style="left:19px;top:23px">ToolTip</div>
<svg style="left:3px;top:45px" width="9" height="9"><rect x="0.5" y="0.5" width="8" height="8" fill="none" stroke="#f1f1f1"/><path d="M2 4.5 L7 4.5" stroke="#f1f1f1" stroke-width="1.2"/></svg>
<div class="t b" style="left:19px;top:42px">Behavior</div>
<div class="a" style="left:15px;top:59px;width:233px;height:18px;background:#252526"></div>
<div class="a" style="left:249px;top:59px;width:245px;height:18px;background:#252526"></div>
<div class="t" style="left:19px;top:61px">Culture</div>
<div class="t" style="left:252px;top:61px">(Default)</div>
<div class="a" style="left:15px;top:78px;width:233px;height:18px;background:#252526"></div>
<div class="a" style="left:249px;top:78px;width:245px;height:18px;background:#252526"></div>
<div class="t" style="left:19px;top:80px">Visible</div>
<div class="t" style="left:252px;top:80px">True</div>
<svg style="left:3px;top:102px" width="9" height="9"><rect x="0.5" y="0.5" width="8" height="8" fill="none" stroke="#f1f1f1"/><path d="M2 4.5 L7 4.5" stroke="#f1f1f1" stroke-width="1.2"/></svg>
<div class="t b" style="left:19px;top:99px">Data</div>
<div class="a" style="left:15px;top:116px;width:233px;height:18px;background:#252526"></div>
<div class="a" style="left:249px;top:116px;width:245px;height:18px;background:#252526"></div>
<svg style="left:3px;top:121px" width="9" height="9"><rect x="0.5" y="0.5" width="8" height="8" fill="none" stroke="#f1f1f1"/><path d="M2 4.5 L7 4.5 M4.5 2 L4.5 7" stroke="#f1f1f1" stroke-width="1.2"/></svg>
<div class="t" style="left:19px;top:118px">(ApplicationSettings)</div>
<div class="a" style="left:15px;top:135px;width:233px;height:18px;background:#252526"></div>
<div class="a" style="left:249px;top:135px;width:245px;height:18px;background:#252526"></div>
<div class="t" style="left:19px;top:137px">Bindings</div>
<div class="t" style="left:252px;top:137px">(none)</div>
<div class="a" style="left:15px;top:154px;width:233px;height:18px;background:#252526"></div>
<div class="a" style="left:249px;top:154px;width:245px;height:18px;background:#252526"></div>
<div class="t" style="left:19px;top:156px">DataSource</div>
<div class="t" style="left:252px;top:156px">(none)</div>
<div class="a" style="left:15px;top:173px;width:233px;height:18px;background:#252526"></div>
<div class="a" style="left:249px;top:173px;width:245px;height:18px;background:#252526"></div>
<div class="t" style="left:19px;top:175px">Filters</div>
<div class="t" style="left:252px;top:175px">(none)</div>
<div class="a" style="left:15px;top:192px;width:233px;height:18px;background:#252526"></div>
<div class="a" style="left:249px;top:192px;width:245px;height:18px;background:#252526"></div>
<div class="t" style="left:19px;top:194px">Groups</div>
<div class="t" style="left:252px;top:194px">(none)</div>
<div class="a" style="left:15px;top:211px;width:233px;height:18px;background:#252526"></div>
<div class="a" style="left:249px;top:211px;width:245px;height:18px;background:#252526"></div>
<div class="t" style="left:19px;top:213px">ReportParameters</div>
<div class="t" style="left:252px;top:213px">(none)</div>
<div class="a" style="left:15px;top:230px;width:233px;height:18px;background:#252526"></div>
<div class="a" style="left:249px;top:230px;width:245px;height:18px;background:#252526"></div>
<div class="t" style="left:19px;top:232px">Sortings</div>
<div class="t" style="left:252px;top:232px">(none)</div>
<svg style="left:3px;top:254px" width="9" height="9"><rect x="0.5" y="0.5" width="8" height="8" fill="none" stroke="#f1f1f1"/><path d="M2 4.5 L7 4.5" stroke="#f1f1f1" stroke-width="1.2"/></svg>
<div class="t b" style="left:19px;top:251px">Design</div>
<div class="a" style="left:15px;top:268px;width:233px;height:18px;background:#252526"></div>
<div class="a" style="left:249px;top:268px;width:245px;height:18px;background:#252526"></div>
<div class="t" style="left:19px;top:270px">(Name)</div>
<div class="t b" style="left:252px;top:270px">ProofOfMailingReport</div>
<div class="a" style="left:15px;top:287px;width:233px;height:18px;background:#252526"></div>
<div class="a" style="left:249px;top:287px;width:245px;height:18px;background:#252526"></div>
<div class="t" style="left:19px;top:289px">Language</div>
<div class="t" style="left:252px;top:289px">(Default)</div>
</div>
<div class="a" style="left:1890px;top:746px;width:17px;height:300px;background:#3e3e42"></div>
<svg style="left:1894px;top:752px" width="10" height="6"><path d="M0 5.5 L4.5 0.5 L9 5.5 Z" fill="#999"/></svg>
<div class="a" style="left:1894px;top:808px;width:9px;height:109px;background:#686868"></div>
<svg style="left:1894px;top:1035px" width="10" height="6"><path d="M0 0.5 L4.5 5.5 L9 0.5 Z" fill="#999"/></svg>
<div class="a" style="left:1395px;top:1045px;width:513px;height:1px;background:#3f3f46"></div><div class="a" style="left:1395px;top:1046px;width:513px;height:63px;background:#252526"></div>
<div class="t b" style="left:1401px;top:1053px">(Name)</div>
<div class="t" style="left:1401px;top:1072px">Indicates the name used in code to identify the object.</div>
</div>

<!-- ============ STATUS ============ -->
<div id="status">
<div class="a" style="left:0;top:1116px;width:1915px;height:23px;background:#007acc"></div>
<div class="t" style="left:0;top:1121px;color:#fff">Ready</div>
<svg style="left:1829px;top:1121px" width="10" height="13"><path d="M5 12.5 L5 2 M1 5.5 L5 1.5 L9 5.5" stroke="#d8d8d8" stroke-width="1.6" fill="none"/></svg>
<div class="t" style="left:1847px;top:1121px;color:#fff">Publish</div>
<svg style="left:1892px;top:1125px" width="8" height="5"><path d="M0 4.5 L7 4.5 L3.5 0.5 Z" fill="#fff"/></svg>
<div class="a" style="left:0;top:1139px;width:1915px;height:6px;background:#000"></div>
<div class="a" style="left:43px;top:1139px;width:344px;height:6px;background:#3a3a3a"></div>
<div class="a" style="left:780px;top:1139px;width:48px;height:6px;background:#3a3a3a"></div><div class="a" style="left:1910px;top:1139px;width:1px;height:6px;background:#909090"></div>
</div>

</body></html>
